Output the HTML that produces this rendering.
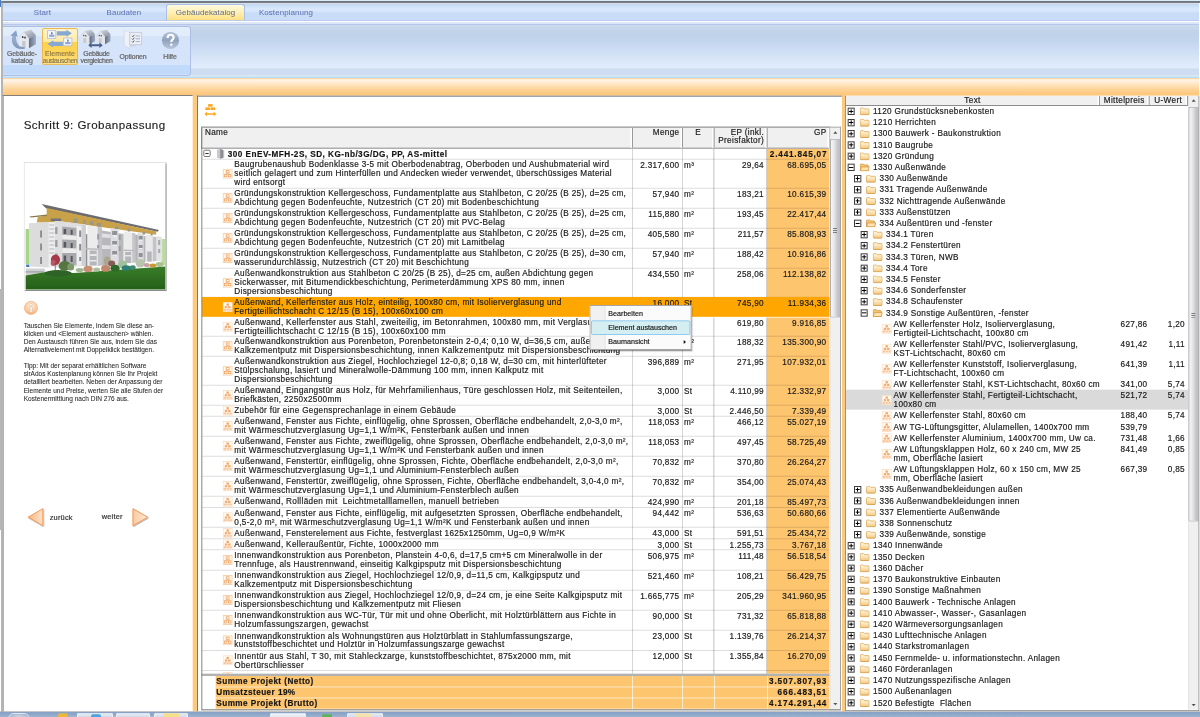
<!DOCTYPE html><html><head><meta charset="utf-8"><title>sirAdos</title><style>*{box-sizing:border-box;margin:0;padding:0}
html,body{width:1200px;height:717px;overflow:hidden;background:#fff}
#wrap{left:0;top:0;width:3600px;height:2151px;transform:scale(.333333333);transform-origin:0 0}
#z{left:0;top:0;width:1200px;height:717px;zoom:3;overflow:hidden}
body{position:relative;font-family:"Liberation Sans",sans-serif;font-size:8.2px;letter-spacing:.32px;color:#141414;line-height:8.7px;-webkit-text-stroke:.18px #2a2a2a}
div,svg{position:absolute}
/* window frame */
#topl{left:0;top:0;width:1200px;height:1px;background:#dcebf8}
#topd{left:1px;top:1px;width:1199px;height:2px;background:linear-gradient(#6b7480,#7c7f84)}
#lblue{left:0;top:0;width:1px;height:7px;background:#4a7fc1}
#lgray{left:1.2px;top:1px;width:1.4px;height:711px;background:#8d9096}
#lstrip{left:0;top:289px;width:1.3px;height:241px;background:#b6b6b6}
/* tab bar */
#tabbar{left:3px;top:3px;width:1196px;height:18px;background:linear-gradient(#d8dfe9 0,#d8dfe9 1px,#c3d8f4 1px,#dae8fb 6px,#d8e6fb 8px,#c8dcf8 10px,#c9ddf8 17px,#b9c9ee 17px)}
.tab{top:4px;height:17px;line-height:17px;text-align:center;font-size:7.9px;letter-spacing:.12px;color:#6175b4;white-space:nowrap;-webkit-text-stroke:.05px #6175b4}
#tabact{left:166px;top:4px;width:79px;height:16.3px;border:1px solid #a9c1e6;border-bottom:none;border-radius:3px 3px 0 0;background:linear-gradient(#fffae0,#ffefb2 50%,#ffe080);}
/* ribbon */
#ribbon{left:3px;top:21px;width:1196px;height:57px;background:linear-gradient(#fff 0,#fff 1px,#dbe7f7 1px,#dbe7f7 3px,#cfdcee 3px,#c9d8ec 6px,#bfd2ea 12px,#c3d5ee 20px,#d3e2f6 34px,#e0ecfc 46px,#e0ecfc 47px,#cddcf0 48px,#cfdef2 54px,#e4eefb 55px,#b9dcf5 56px,#b9dcf5 57px)}
#rl1{left:3px;top:24px;width:1196px;height:1px;background:#b4c3e8;opacity:.8}
#rgroup{left:3px;top:26px;width:188px;height:50px;border:1px solid #adbfe6;border-left:none;border-radius:0 3px 3px 0;background:linear-gradient(#e3eefc 0,#e1ecfc 9px,#d6e4fa 9.5px,#d5e4fa 38px,#c2dbfb 38.5px,#c0d9fb 47px,#dbe9fb 48px)}
#rsel{left:42px;top:28px;width:36px;height:37px;border:1px solid #e9b955;border-radius:2px;background:linear-gradient(#fff5cc 0,#ffeaa4 12.6px,#ffd24c 13.4px,#ffd55a 25px,#ffe394 36px)}
.rlab{font-size:6.9px;line-height:6.4px;letter-spacing:-.1px;text-align:center;color:#646464;white-space:nowrap;-webkit-text-stroke:.22px #686868}
/* orange band */
#oband{left:3px;top:78px;width:1196px;height:18px;background:linear-gradient(#f8c078 0,#fde9cf 1px,#fff4e6 2px,#ffe6c6 6px,#fed49a 11px,#fdc77c 16px,#fdc980 18px)}
#obody{left:3px;top:95px;width:1196px;height:616.3px;background:#fdc97e}
/* left panel */
#left{left:2.6px;top:95px;width:190.2px;height:616.6px;background:#fff;border-left:1.3px solid #8a8a8a;border-top:1px solid #7e7e7e}
#lin{left:-.9px;top:-.5px;width:190px;height:615px}
#left .ttl{left:21px;top:23.3px;font-size:11.6px;letter-spacing:.43px;color:#181818;-webkit-text-stroke:.12px #222;line-height:13px;white-space:nowrap}
#left .help{left:21px;font-size:6.55px;letter-spacing:0;line-height:8.17px;color:#1e1e1e;white-space:nowrap;-webkit-text-stroke:.06px #333}
#left .nav{font-size:7.4px;letter-spacing:.2px;color:#333;white-space:nowrap}
/* main panel */
#main{left:197px;top:95.5px;width:645px;height:615.8px;background:#fff;border-left:1px solid #737a84;border-top:1px solid #737a84}
#tbicon{left:6.2px;top:7.5px;width:12px;height:12.2px;overflow:visible}
#thead{left:3px;top:30.1px;width:629px;height:22.1px;background:#f0f0f0;border-top:1px solid #a4a4a4;border-left:1px solid #8c8c8c;border-bottom:1px solid #8c8c8c}
.hc{top:0;height:20px;border-right:1px solid #9a9a9a;padding:0 2.5px 0 0;text-align:right;line-height:8.6px;white-space:nowrap;box-shadow:inset -1.5px 0 0 #fff}
#tbody{left:3.5px;top:52px;width:628px;height:526px;overflow:hidden}
#gpbg{left:565px;top:0;width:63px;height:526px;background:#fec56f}
.vl{top:0;width:.9px;height:526px;background:#c2c2c2;margin-left:-.6px}
.row{left:0;width:628px;border-bottom:1px solid rgba(0,0,0,.135)}
.row.hl{border-bottom-color:rgba(255,255,255,.7)}
.hlbg{left:0;width:628px;background:#ffa600}
.ei{left:21px;width:10px;height:10px}
.nm{left:32.8px;top:.9px;white-space:pre;line-height:8.78px}
.num{top:1.35px;text-align:right;padding-right:3px;white-space:nowrap}
.unit{top:1.35px;padding-left:1.5px;white-space:nowrap}
.b,.gt{font-weight:bold;letter-spacing:.5px;font-size:8.2px}
.num.b{letter-spacing:.8px;padding-right:2.2px}
.gt{letter-spacing:.46px;left:26.3px;top:1px;white-space:nowrap;color:#111}
.exp{left:1.8px;top:1.2px;width:7.4px;height:7.4px;border:1px solid #767676;border-radius:1.6px;background:#fff}
.exp:after{content:"";position:absolute;left:.9px;top:2.2px;width:3.6px;height:1px;background:#333}
.bk{left:14.8px;top:.3px;width:8.6px;height:10.2px}
#tfoot{left:3px;top:577px;width:629px;height:36.5px;border-top:2.4px solid #b2b2b2;background:#fff}
#tframe{left:3.3px;top:30.1px;width:639.7px;height:583.7px;border:1px solid #858585;border-top-color:#a4a4a4;border-right-color:#a4a4a4;border-bottom-color:#747474}
.frow{left:14.8px;width:613.7px;height:11.1px;background:#fec56f;border-bottom:.85px solid #fff}
.fl{left:.5px;top:.8px;font-weight:bold;letter-spacing:.43px;white-space:nowrap;color:#111}
.fv{right:2.2px;top:.8px;font-weight:bold;letter-spacing:.87px;white-space:nowrap;color:#111}
.fvl{top:0;width:.7px;height:34px;background:#fff}
/* scrollbars */
#msb{left:631.7px;top:31px;width:11px;height:583px;background:#f0f0f0;border-left:1px solid #e4e4e4}
#rsb{left:341.9px;top:0;width:10.4px;height:614.2px;background:#f0f0f0;border-left:1px solid #e4e4e4}
.sbup,.sbdn{left:0;width:10px;height:10px}
.sbup{top:0}.sbdn{bottom:0}
.sbup:after{content:"";position:absolute;left:2.7px;top:3.7px;border:2.3px solid transparent;border-top:none;border-bottom:2.6px solid #505050}
.sbdn:after{content:"";position:absolute;left:2.7px;top:2.6px;border:2.3px solid transparent;border-bottom:none;border-top:2.6px solid #505050}
.sbthumb{left:-.6px;width:10.6px;border:1px solid #b0b0b4;border-right-color:#9c9c9e;border-radius:2px;background:linear-gradient(90deg,#f5f5f6,#e8e8ea 35%,#cbcbcf 70%,#bcbcc0)}
.grip{left:2px;top:50%;width:4px;height:5px;background:repeating-linear-gradient(#7c7c84 0,#7c7c84 1px,transparent 1px,transparent 2px)}
/* context menu */
#ctx{left:391.5px;top:208.5px;width:102px;height:45px;background:#fbfbfb;border:1px solid #a6a6a6;box-shadow:1.5px 1.5px 1.5px rgba(0,0,0,.38);font-size:7.15px;letter-spacing:0;color:#111}
#ctx .gut{left:0;top:0;width:15px;height:43px;background:#f1f1f1;border-right:1px solid #e6e6e6}
#ctx .sel{left:.6px;top:14.3px;width:99.2px;height:14.8px;border:1px solid #8fcaf0;border-radius:1.5px;background:#d5eef2}
#ctx .it{left:17.8px;white-space:nowrap;line-height:9px}
/* right panel */
#right{left:845px;top:95.5px;width:354.2px;height:615.4px;background:#fff;border-left:1px solid #a89068;border-right:1px solid #969696;border-bottom:1px solid #a2a2a2;overflow:hidden}
#rhead{left:0;top:0;width:341.9px;height:10.5px;background:#f0f0f0;border-bottom:1px solid #8c8c8c}
.rh{top:0;height:9.5px;line-height:9px;text-align:center;border-right:1px solid #9a9a9a;white-space:nowrap;box-shadow:inset -1.5px 0 0 #fff}
.tr{left:0;width:342px;height:11.2px}
.pm{top:2px;width:7.3px;height:7.3px;border:1px solid #3c3c3c;background:#fff}
.pm:before{content:"";position:absolute;left:.6px;top:2.15px;width:4.1px;height:1px;background:#000}
.pm.plus:after{content:"";position:absolute;left:2.15px;top:.6px;width:1px;height:4.1px;background:#000}
.fo{top:1.8px;width:10px;height:8px}
.tt{top:1.4px;white-space:pre}
.er{left:0;width:342px}
.er.sel{background:#dadada}
.er .ei{left:35.5px}
.er .et{left:47.5px;top:1.6px;white-space:pre;line-height:8.5px}
.mp{left:254.5px;width:47px;top:1.6px;text-align:right}
.uw{left:303.5px;width:35.5px;top:1.6px;text-align:right}
/* taskbar */
#taskbar{left:0;top:711.4px;width:1200px;height:7px;background:linear-gradient(#a9aeb6 0,#a2aab6 .7px,#86a1c6 1.2px,#8ea8ca 3px,#a0b6d2 6px)}
.tbb{top:1.4px;height:6px;border:1px solid #eef2f7;border-bottom:none;border-radius:2px 2px 0 0;background:linear-gradient(#e6edf5,#c6d3e3)}

#rsb .sbdn:after{top:4.4px}
</style></head><body><div id="wrap"><div id="z">
<div id="topl"></div><div id="topd"></div><div id="lblue"></div><div id="lgray"></div><div id="lstrip"></div>
<div id="tabbar"></div>
<div id="tabact"></div>
<div class="tab" style="left:20px;width:45px">Start</div>
<div class="tab" style="left:100px;width:48px">Baudaten</div>
<div class="tab" style="left:166px;width:79px;color:#667089;-webkit-text-stroke-color:#667089">Gebäudekatalog</div>
<div class="tab" style="left:252px;width:68px">Kostenplanung</div>
<div id="ribbon"></div><div id="rl1"></div>
<div id="rgroup"></div>
<div id="rsel"></div>
<!-- icon 1: Gebaeudekatalog -->
<svg style="left:9px;top:28.3px;width:28px;height:23px" viewBox="0 0 26 21">
<defs><linearGradient id="hg" x1="0" y1="0" x2="1" y2="1"><stop offset="0" stop-color="#eceef1"/><stop offset="1" stop-color="#7f8a9c"/></linearGradient>
<linearGradient id="hs" x1="0" y1="0" x2="1" y2="0"><stop offset="0" stop-color="#5f6d86"/><stop offset="1" stop-color="#a2adbf"/></linearGradient>
<linearGradient id="ba" x1="0" y1="0" x2="0" y2="1"><stop offset="0" stop-color="#9fb2cd"/><stop offset="1" stop-color="#7790b6"/></linearGradient></defs>
<path d="M3.8 6L6.3 3.5L6.6 9.5Q7 15.4 12 16.6L16 16.4L14.5 18.8Q6.4 20.4 3.2 14Q1.8 9.8 3.6 6.2Z" fill="url(#ba)" opacity=".9"/>
<path d="M1.2 6.6L6.6 1.6L8 7.4Z" fill="#86a2cb"/>
<path d="M9 8.2L14.2 2.8L20.5 1.2L25 6.2L18.5 9.2Z" fill="url(#hg)"/>
<path d="M9 8.2L14 3.5L18.5 9.2V18.3L9 16.2Z" fill="#e6e9ee"/>
<path d="M18.5 9.2L25 6.2V14.5L18.5 18.3Z" fill="url(#hs)"/>
<rect x="12" y="7.2" width="1.4" height="1.6" fill="#333"/><rect x="14.2" y="7.6" width="1.4" height="1.6" fill="#333"/>
<path d="M12.2 11.5H15.3V17.5L12.2 16.8Z" fill="#c2c8d2"/>
</svg>
<!-- icon 2: Elemente austauschen -->
<svg style="left:46px;top:28.5px;width:27px;height:20px" viewBox="0 0 27 20">
<path d="M10.8 2.6H20.4V1.2L25.9 4.7L20.4 8.2V6.8H10.8Z" fill="#88a8d4"/>
<path d="M16.9 13.2H7.3V11.7L1.3 15.3L7.3 18.9V17.4H16.9Z" fill="#88a8d4"/>
<rect x="1.6" y="2" width="8.2" height="7.8" fill="#f4f6fb" stroke="#aebcd6" stroke-width=".8"/>
<rect x="5" y="3.6" width="1.6" height="1.8" fill="#5f83bd"/><rect x="3.1" y="6" width="5.3" height="2.2" fill="#8fa9d3"/><path d="M5.8 5.2V6.2" stroke="#5f83bd" stroke-width=".6"/>
<rect x="17.7" y="9.3" width="8.2" height="7.9" fill="#f4f6fb" stroke="#aebcd6" stroke-width=".8"/>
<rect x="21.1" y="10.9" width="1.6" height="1.8" fill="#5f83bd"/><rect x="19.2" y="13.3" width="5.3" height="2.2" fill="#8fa9d3"/><path d="M21.9 12.5V13.5" stroke="#5f83bd" stroke-width=".6"/>
</svg>
<!-- icon 3: Gebaeude vergleichen -->
<svg style="left:79px;top:28.5px;width:34px;height:21px" viewBox="0 0 34 21">
<g id="hs1"><path d="M1.5 6.8L6.2 2.2L12.2 1L16 5.5L10.5 8Z" fill="url(#hg)"/><path d="M1.8 6.8L6.2 2.9L10.5 8V15.5L1.8 13.6Z" fill="#e2e5ea"/><path d="M10.5 8L16 5.5V12.5L10.5 15.5Z" fill="url(#hs)"/><rect x="4.2" y="6.2" width="1.2" height="1.3" fill="#444"/><rect x="6.2" y="6.5" width="1.2" height="1.3" fill="#444"/><path d="M4.4 9.6H7.1V14.7L4.4 14.1Z" fill="#c2c8d2"/></g>
<use href="#hs1" x="15.5" y="0"/>
<path d="M9.2 16.6L12.6 13.9V15.5H20.4V13.9L23.8 16.6L20.4 19.3V17.7H12.6V19.3Z" fill="#4b5f8a"/>
</svg>
<!-- icon 4: Optionen -->
<svg style="left:123px;top:29px;width:21px;height:21px" viewBox="0 0 21 21">
<path d="M1.2 1.2L6.8 3.4V19.6L1.2 16.2Z" fill="#eef1f6" stroke="#c6cedb" stroke-width=".5"/>
<path d="M6.8 3.6H18.6V15.6H6.8Z" fill="#eef2f8" stroke="#aeb9cb" stroke-width=".6"/>
<path d="M6.8 15.6H13.5L12.8 17.5H6.8Z" fill="#cfd6e2"/>
<path d="M9 6.8L9.9 7.8L11.3 5.8M9 9.6L9.9 10.6L11.3 8.6M9 12.4L9.9 13.4L11.3 11.4" stroke="#3c4454" stroke-width=".8" fill="none"/>
<path d="M12.6 7H17M12.6 9.8H17M12.6 12.6H17" stroke="#9aa6ba" stroke-width=".9"/>
</svg>
<!-- icon 5: Hilfe -->
<svg style="left:161px;top:31px;width:19px;height:19px" viewBox="0 0 19 19">
<defs><linearGradient id="qg" x1="0" y1="0" x2="0" y2="1"><stop offset="0" stop-color="#b4c3d6"/><stop offset=".5" stop-color="#8fa3bd"/><stop offset="1" stop-color="#b8c6d8"/></linearGradient></defs>
<circle cx="9.5" cy="9.3" r="8.6" fill="url(#qg)"/>
<path d="M6.6 7Q6.6 3.8 9.6 3.8Q12.6 3.8 12.6 6.4Q12.6 8 11.2 8.9Q10.3 9.6 10.3 11" fill="none" stroke="#fff" stroke-width="2.1"/>
<rect x="9.2" y="12.6" width="2.2" height="2.2" rx=".6" fill="#fff"/>
</svg>
<div class="rlab" style="left:5px;top:50.5px;width:34px">Gebäude-<br>katalog</div>
<div class="rlab" style="left:41.5px;top:50.5px;width:37px;color:#857547;-webkit-text-stroke:.12px #857547"><span style="letter-spacing:.1px">Elemente</span><br><span style="letter-spacing:-.42px">austauschen</span></div>
<div class="rlab" style="left:78px;top:50.5px;width:37px;letter-spacing:-.3px">Gebäude<br>vergleichen</div>
<div class="rlab" style="left:116px;top:53.5px;width:34px">Optionen</div>
<div class="rlab" style="left:153px;top:53.5px;width:34px">Hilfe</div>
<div id="oband"></div><div id="obody"></div>

<div id="left"><div id="lin">
<div class="ttl">Schritt 9: Grobanpassung</div>
<svg style="left:21px;top:66.5px;width:143px;height:129px" viewBox="0 0 143 129">
<defs><linearGradient id="lw" x1="0" y1="0" x2="0" y2="1"><stop offset="0" stop-color="#3a7d2a"/><stop offset="1" stop-color="#245f18"/></linearGradient>
<filter id="bl"><feGaussianBlur stdDeviation=".45"/></filter></defs>
<rect x=".5" y=".5" width="142" height="128" fill="#fff" stroke="#e2e2e2"/>
<path d="M142.5 1.5V128.5H1.5" fill="none" stroke="#8c8c8c" stroke-width="1.2"/>
<g filter="url(#bl)">
<!-- trees bg -->
<path d="M2 67H5.5V102H2Z" fill="#a6d488"/><path d="M137.5 77H141.5V103H137.5Z" fill="#b9dc9e"/>
<rect x="2.5" y="102.5" width="3.5" height="2.5" fill="#3f78b8"/>
<!-- pavement -->
<path d="M2 106.5H21L22 110L2 113.5Z" fill="#cfd2d4"/><path d="M2 109.3H20V110.5H2Z" fill="#9a9da0"/>
<!-- lawn -->
<path d="M2 113.5L22 110L50 111L141.5 104.5V127.5H2Z" fill="url(#lw)"/>
<!-- roof -->
<path d="M17.9 42L135.3 68L134 69.8L22.6 46.6Z" fill="#6c6c70"/>
<path d="M23 46L132.5 69.4V72.8L38 59.5L26.5 60.5H13.2L14 55.2L23 53.6Z" fill="#c9a14a"/>
<path d="M5.6 54.4L23.2 52.6V54L7 55.6Z" fill="#8a7a4a"/>
<!-- body -->
<path d="M5.3 61.2L25.2 60V105.5L5.3 104.5Z" fill="#dcdcdc"/>
<path d="M25.2 60L31 60.3V105L25.2 105.5Z" fill="#ededed"/>
<path d="M25.6 62H30.6V64H25.6ZM25.6 66H30.6V68H25.6ZM25.6 70H30.6V72H25.6ZM25.6 74H30.6V76H25.6ZM25.6 78H30.6V80H25.6ZM25.6 82H30.6V84H25.6ZM25.6 86H30.6V88H25.6ZM25.6 90H30.6V92H25.6Z" fill="#d2d2d4"/>
<path d="M31 58.8L62.3 62.5V104L31 105.5Z" fill="#dedee0"/>
<path d="M38.5 64.5L53 66V103L38.5 104Z" fill="#a9a9ad"/>
<path d="M38.5 72.8L53 73.8V78L38.5 77.5ZM38.5 86L53 86.6V91L38.5 91Z" fill="#ececec"/>
<path d="M40 67H42.5V72H40ZM40 80H42.5V85.5H40ZM40 93.5H42.5V100H40ZM47 67.8H49V72.8H47ZM47 81H49V86H47ZM47 94H49V100H47Z" fill="#55585e"/>
<path d="M53 64L58 64.6V103.5L53 103.5Z" fill="#efefef"/>
<path d="M58 63L62.3 63.5V104L58 104Z" fill="#cfcfd1"/>
<path d="M55.5 68.5H57.5V75H55.5ZM55.5 82H57.5V88.5H55.5ZM55.5 95H57.5V99H55.5Z" fill="#8a8e94"/>
<!-- tower 2 -->
<path d="M63.6 63.2L74 64.8V104L63.6 104.5Z" fill="#ececec"/>
<path d="M74 64.8L78.4 65.4V103.5L74 104Z" fill="#c3c3c6"/>
<path d="M62.3 72L63.6 72.2V104H62.3Z" fill="#8f8f93"/>
<path d="M62.5 86L76 86.5V88L62.5 87.6Z" fill="#bdbdc0"/>
<path d="M66 88.5H73V103.5H66Z" fill="#b4b6ba"/><path d="M66 92H73V94H66ZM66 98H73V99.5H66Z" fill="#e8e8ea"/>
<path d="M73.5 72H75.5V77.5H73.5ZM73.5 83H75.5V86H73.5Z" fill="#9a9da2"/>
<!-- section 3 -->
<path d="M78.4 68.5L100 72V102L78.4 103.5Z" fill="#b8b8bc"/>
<path d="M78.4 71.5L87 72.6V76L78.4 75.5ZM78.4 83L87 83.6V87L78.4 87Z" fill="#e2e2e4"/>
<path d="M87 66L95 67.2V102.5L87 103Z" fill="#dedee0"/>
<path d="M88.5 69H93.5V75H88.5ZM88.5 79H93.5V84H88.5ZM88.5 89H93.5V94H88.5Z" fill="#8f9298"/>
<path d="M88.5 73H93.5V75H88.5ZM88.5 82.5H93.5V84H88.5ZM88.5 92.5H93.5V94H88.5Z" fill="#eeeef0"/>
<path d="M95 73H97V78H95ZM95 84H97V89H95Z" fill="#9a9da2"/>
<!-- tower 3 -->
<path d="M100 69.5L108.5 70.8V101L100 102Z" fill="#ebebeb"/>
<path d="M108.5 70.8L111.5 71.2V100.5L108.5 101Z" fill="#c6c6c9"/>
<path d="M100 87.5L111 88V89.2L100 89Z" fill="#b9b9bc"/>
<path d="M101.5 90H107.5V101H101.5Z" fill="#b4b6ba"/><path d="M101.5 93H107.5V94.5H101.5Z" fill="#e8e8ea"/>
<!-- section 4 -->
<path d="M111.5 72.5L122 74.2V100L111.5 100.5Z" fill="#b4b4b9"/>
<path d="M114 71L120 72V100L114 100.5Z" fill="#dcdcde"/>
<path d="M115 74H119V79H115ZM115 83H119V87.5H115ZM115 91H119V95H115Z" fill="#8f9298"/>
<path d="M115 77.5H119V79H115ZM115 86H119V87.5H115Z" fill="#eeeef0"/>
<path d="M122 72.5L129 73.6V99.5L122 100Z" fill="#e9e9e9"/>
<path d="M123.5 89.5H128V99.5H123.5Z" fill="#b4b6ba"/>
<path d="M129 74.5L133 75V99L129 99.5Z" fill="#c4c4c7"/>
<path d="M133 74L138.5 75V99L133 99Z" fill="#e3e3e3"/>
<path d="M134.5 78H136.5V83H134.5ZM134.5 87H136.5V91H134.5Z" fill="#a6a9ae"/>
<!-- left block windows -->
<path d="M16.5 68.5H18.3V75.5H16.5ZM16.5 81.5H18.3V88.5H16.5ZM16.5 95H18.3V102H16.5Z" fill="#85898f"/>
<path d="M31.5 65H33.8V72H31.5ZM31.5 78H33.8V85H31.5ZM31.5 91.5H33.8V98H31.5Z" fill="#9a9da2"/>
<!-- roof-level windows -->
<path d="M27 56.5H37.5V59H27Z" fill="#70737a"/>
<path d="M50 56.5H54V61H50ZM59.5 58H62V62H59.5ZM66 59.5H70V63H66ZM73 61H77.5V64.5H73ZM91.5 64.5H95V67H91.5ZM104 66.5H106.5V69.5H104ZM119 70H121.5V72.5H119ZM127 71.5H129V73.5H127Z" fill="#9a9688"/>
<!-- bushes -->
<ellipse cx="34.5" cy="111.2" rx="13.5" ry="3.2" fill="#2f6227"/>
<ellipse cx="31.8" cy="97.8" rx="4.6" ry="5.2" fill="#a8384c"/><ellipse cx="29.5" cy="101" rx="2.5" ry="3" fill="#b85a64"/>
<path d="M31.6 101V109" stroke="#5a4a2a" stroke-width=".7"/>
<ellipse cx="41" cy="104" rx="6" ry="5" fill="#55763f"/>
<ellipse cx="47" cy="105" rx="3.5" ry="3.5" fill="#7d9a6a"/>
<ellipse cx="56" cy="108" rx="4" ry="2" fill="#9fb894"/>
<ellipse cx="64.4" cy="107" rx="4.6" ry="3.2" fill="#c98f74"/>
<ellipse cx="73" cy="107.5" rx="3.5" ry="2" fill="#a9c09a"/>
<ellipse cx="82" cy="106.4" rx="4.6" ry="3.4" fill="#c4876c"/>
<ellipse cx="83.5" cy="99" rx="3.4" ry="4.5" fill="#a9a692"/>
<ellipse cx="88" cy="101.5" rx="3.5" ry="3" fill="#8a5a58"/>
<ellipse cx="91.4" cy="106.2" rx="4.6" ry="3.4" fill="#2f6a2c"/>
<ellipse cx="99" cy="102.5" rx="4.5" ry="4" fill="#9fc09a"/>
<ellipse cx="102.5" cy="106" rx="4.5" ry="2.8" fill="#2f7f74"/>
<ellipse cx="109" cy="105.6" rx="3" ry="2.4" fill="#3d8a70"/>
<ellipse cx="116.6" cy="101.2" rx="4.6" ry="4.2" fill="#b9c4ac"/>
<ellipse cx="123" cy="103" rx="3" ry="2" fill="#c9a0a8"/>
<ellipse cx="129.2" cy="103.4" rx="3.4" ry="2" fill="#c99a30"/>
<ellipse cx="136" cy="102.5" rx="4" ry="2.4" fill="#a9c290"/>
</g>
</svg>
<svg style="left:21px;top:204.9px;width:15px;height:15px" viewBox="0 0 15 15"><defs><radialGradient id="ig" cx=".5" cy=".35" r=".7"><stop offset="0" stop-color="#fff0e0"/><stop offset=".7" stop-color="#fbc493"/><stop offset="1" stop-color="#f3a25c"/></radialGradient></defs><circle cx="7.3" cy="7.5" r="6.6" fill="url(#ig)" stroke="#f0b07a" stroke-width=".6"/><path d="M5.9 6.1H8.3V10.6H9.2V11.6H5.6V10.6H6.5V7.1H5.9Z" fill="#fff" stroke="#c9b4a4" stroke-width=".45"/><circle cx="7.3" cy="4.2" r="1.15" fill="#fff" stroke="#c9b4a4" stroke-width=".45"/></svg>
<div class="help" style="top:225.9px">Tauschen Sie Elemente, indem Sie diese an-<br>klicken und &lt;Element austauschen&gt; wählen.<br>Den Austausch führen Sie aus, indem Sie das<br>Alternativelement mit Doppelklick bestätigen.</div>
<div class="help" style="top:266.3px">Tipp: Mit der separat erhältlichen Software<br>sirAdos Kostenplanung können Sie Ihr Projekt<br>detailliert bearbeiten. Neben der Anpassung der<br>Elemente und Preise, werten Sie alle Stufen der<br>Kostenermittlung nach DIN 276 aus.</div>
<svg style="left:23px;top:411px;width:20px;height:21px;overflow:visible" viewBox="0 0 20 21"><defs><linearGradient id="ng" x1="0" y1="0" x2="1" y2="0"><stop offset="0" stop-color="#f9b580"/><stop offset="1" stop-color="#fde3cc"/></linearGradient><filter id="sh" x="-30%" y="-30%" width="160%" height="160%"><feDropShadow dx=".6" dy=".8" stdDeviation=".7" flood-color="#000" flood-opacity=".35"/></filter></defs><path d="M2.5 10.5L17.2 2V19Z" fill="url(#ng)" stroke="#f39a55" stroke-width="1" filter="url(#sh)"/></svg>
<svg style="left:128px;top:411px;width:20px;height:21px;overflow:visible" viewBox="0 0 20 21"><defs><linearGradient id="ng2" x1="0" y1="0" x2="1" y2="0"><stop offset="0" stop-color="#fbc9a0"/><stop offset="1" stop-color="#fdebd9"/></linearGradient></defs><path d="M17 10.5L2.3 2V19Z" fill="url(#ng2)" stroke="#f39a55" stroke-width="1" filter="url(#sh)"/></svg>
<div class="nav" style="left:47px;top:417.5px">zurück</div>
<div class="nav" style="left:99px;top:417px">weiter</div>
</div></div>

<div id="main">
<svg id="tbicon" viewBox="0 0 12 12"><rect x="3.8" y="0" width="4.4" height="2.6" fill="#ffa51f"/><rect x="1" y="3.3" width="4.6" height="2.6" fill="#ffa51f"/><rect x="6.2" y="3.3" width="4.6" height="2.6" fill="#ffa51f"/><path d="M0 9.9L2.6 7.6V9.1H9.4V7.6L12 9.9L9.4 12.2V10.7H2.6V12.2Z" fill="#ffa51f"/></svg>
<div id="thead"><div class="hc" style="left:0;width:431.0px;text-align:left;padding-left:3px">Name</div>
<div class="hc" style="left:431.0px;width:50.0px">Menge</div>
<div class="hc" style="left:481.0px;width:31.5px;text-align:center;padding-right:0">E</div>
<div class="hc" style="left:512.5px;width:53.0px">EP (inkl.<br>Preisfaktor)</div>
<div class="hc" style="left:565.5px;width:62.5px">GP</div>
</div>
<div id="tbody">
<div id="gpbg"></div>
<div class="vl" style="left:431.0px"></div>
<div class="vl" style="left:481.0px"></div>
<div class="vl" style="left:512.5px"></div>
<div class="vl" style="left:565.5px"></div>
<div class="row" style="top:0;height:11px"><div class="exp"></div><svg class="bk" viewBox="0 0 8 10"><path d="M0.5 1L3.5 0V10L0.5 9Z" fill="#c8c8cc"/><path d="M3.5 0L6.5 1.2V9.2L3.5 10Z" fill="#8c8c94"/><path d="M6.5 1.2L7.5 2V8.6L6.5 9.2Z" fill="#b4b4ba"/></svg><div class="gt">300 EnEV-MFH-2S, SD, KG-nb/3G/DG, PP, AS-mittel</div><div class="num b" style="left:565.5px;width:62.5px">2.441.845,07</div></div>
<div class="row" style="top:11.0px;height:29.0px">
<svg class="ei" style="top:9.0px" viewBox="0 0 10 10"><rect x=".5" y=".5" width="9" height="9" fill="#fff6ec" stroke="#f8d2ae"/><rect x="3.6" y="1.8" width="2.8" height="2.4" fill="none" stroke="#f0a868" stroke-width=".8"/><rect x="1.8" y="5.8" width="2.4" height="2.2" fill="none" stroke="#f0a868" stroke-width=".8"/><rect x="5.8" y="5.8" width="2.4" height="2.2" fill="none" stroke="#f0a868" stroke-width=".8"/><path d="M5 4.2V5.2M3 5.8V5.2H7V5.8" fill="none" stroke="#f0a868" stroke-width=".6"/></svg>
<div class="nm">Baugrubenaushub Bodenklasse 3-5 mit Oberbodenabtrag, Oberboden und Aushubmaterial wird<br>seitlich gelagert und zum Hinterfüllen und Andecken wieder verwendet, überschüssiges Material<br>wird entsorgt</div>
<div class="num" style="left:431.0px;width:50.0px">2.317,600</div>
<div class="unit" style="left:481.0px">m³</div>
<div class="num" style="left:512.5px;width:53.0px">29,64</div>
<div class="num" style="left:565.5px;width:62.5px">68.695,05</div>
</div>
<div class="row" style="top:40.0px;height:20.0px">
<svg class="ei" style="top:4.5px" viewBox="0 0 10 10"><rect x=".5" y=".5" width="9" height="9" fill="#fff6ec" stroke="#f8d2ae"/><rect x="3.6" y="1.8" width="2.8" height="2.4" fill="none" stroke="#f0a868" stroke-width=".8"/><rect x="1.8" y="5.8" width="2.4" height="2.2" fill="none" stroke="#f0a868" stroke-width=".8"/><rect x="5.8" y="5.8" width="2.4" height="2.2" fill="none" stroke="#f0a868" stroke-width=".8"/><path d="M5 4.2V5.2M3 5.8V5.2H7V5.8" fill="none" stroke="#f0a868" stroke-width=".6"/></svg>
<div class="nm">Gründungskonstruktion Kellergeschoss, Fundamentplatte aus Stahlbeton, C 20/25 (B 25), d=25 cm,<br>Abdichtung gegen Bodenfeuchte, Nutzestrich (CT 20) mit Bodenbeschichtung</div>
<div class="num" style="left:431.0px;width:50.0px">57,940</div>
<div class="unit" style="left:481.0px">m²</div>
<div class="num" style="left:512.5px;width:53.0px">183,21</div>
<div class="num" style="left:565.5px;width:62.5px">10.615,39</div>
</div>
<div class="row" style="top:60.0px;height:20.0px">
<svg class="ei" style="top:4.5px" viewBox="0 0 10 10"><rect x=".5" y=".5" width="9" height="9" fill="#fff6ec" stroke="#f8d2ae"/><rect x="3.6" y="1.8" width="2.8" height="2.4" fill="none" stroke="#f0a868" stroke-width=".8"/><rect x="1.8" y="5.8" width="2.4" height="2.2" fill="none" stroke="#f0a868" stroke-width=".8"/><rect x="5.8" y="5.8" width="2.4" height="2.2" fill="none" stroke="#f0a868" stroke-width=".8"/><path d="M5 4.2V5.2M3 5.8V5.2H7V5.8" fill="none" stroke="#f0a868" stroke-width=".6"/></svg>
<div class="nm">Gründungskonstruktion Kellergeschoss, Fundamentplatte aus Stahlbeton, C 20/25 (B 25), d=25 cm,<br>Abdichtung gegen Bodenfeuchte, Nutzestrich (CT 20) mit PVC-Belag</div>
<div class="num" style="left:431.0px;width:50.0px">115,880</div>
<div class="unit" style="left:481.0px">m²</div>
<div class="num" style="left:512.5px;width:53.0px">193,45</div>
<div class="num" style="left:565.5px;width:62.5px">22.417,44</div>
</div>
<div class="row" style="top:80.0px;height:20.0px">
<svg class="ei" style="top:4.5px" viewBox="0 0 10 10"><rect x=".5" y=".5" width="9" height="9" fill="#fff6ec" stroke="#f8d2ae"/><rect x="3.6" y="1.8" width="2.8" height="2.4" fill="none" stroke="#f0a868" stroke-width=".8"/><rect x="1.8" y="5.8" width="2.4" height="2.2" fill="none" stroke="#f0a868" stroke-width=".8"/><rect x="5.8" y="5.8" width="2.4" height="2.2" fill="none" stroke="#f0a868" stroke-width=".8"/><path d="M5 4.2V5.2M3 5.8V5.2H7V5.8" fill="none" stroke="#f0a868" stroke-width=".6"/></svg>
<div class="nm">Gründungskonstruktion Kellergeschoss, Fundamentplatte aus Stahlbeton, C 20/25 (B 25), d=25 cm,<br>Abdichtung gegen Bodenfeuchte, Nutzestrich (CT 20) mit Lamitbelag</div>
<div class="num" style="left:431.0px;width:50.0px">405,580</div>
<div class="unit" style="left:481.0px">m²</div>
<div class="num" style="left:512.5px;width:53.0px">211,57</div>
<div class="num" style="left:565.5px;width:62.5px">85.808,93</div>
</div>
<div class="row" style="top:100.0px;height:20.0px">
<svg class="ei" style="top:4.5px" viewBox="0 0 10 10"><rect x=".5" y=".5" width="9" height="9" fill="#fff6ec" stroke="#f8d2ae"/><rect x="3.6" y="1.8" width="2.8" height="2.4" fill="none" stroke="#f0a868" stroke-width=".8"/><rect x="1.8" y="5.8" width="2.4" height="2.2" fill="none" stroke="#f0a868" stroke-width=".8"/><rect x="5.8" y="5.8" width="2.4" height="2.2" fill="none" stroke="#f0a868" stroke-width=".8"/><path d="M5 4.2V5.2M3 5.8V5.2H7V5.8" fill="none" stroke="#f0a868" stroke-width=".6"/></svg>
<div class="nm">Gründungskonstruktion Kellergeschoss, Fundamentplatte aus Stahlbeton, C 20/25 (B 25), d=30 cm,<br>wasserundurchlässig, Nutzestrich (CT 20) mit Beschichtung</div>
<div class="num" style="left:431.0px;width:50.0px">57,940</div>
<div class="unit" style="left:481.0px">m²</div>
<div class="num" style="left:512.5px;width:53.0px">188,42</div>
<div class="num" style="left:565.5px;width:62.5px">10.916,86</div>
</div>
<div class="row" style="top:120.0px;height:29.0px">
<svg class="ei" style="top:9.0px" viewBox="0 0 10 10"><rect x=".5" y=".5" width="9" height="9" fill="#fff6ec" stroke="#f8d2ae"/><rect x="3.6" y="1.8" width="2.8" height="2.4" fill="none" stroke="#f0a868" stroke-width=".8"/><rect x="1.8" y="5.8" width="2.4" height="2.2" fill="none" stroke="#f0a868" stroke-width=".8"/><rect x="5.8" y="5.8" width="2.4" height="2.2" fill="none" stroke="#f0a868" stroke-width=".8"/><path d="M5 4.2V5.2M3 5.8V5.2H7V5.8" fill="none" stroke="#f0a868" stroke-width=".6"/></svg>
<div class="nm">Außenwandkonstruktion aus Stahlbeton C 20/25 (B 25), d=25 cm, außen Abdichtung gegen<br>Sickerwasser, mit Bitumendickbeschichtung, Perimeterdämmung XPS 80 mm, innen<br>Dispersionsbeschichtung</div>
<div class="num" style="left:431.0px;width:50.0px">434,550</div>
<div class="unit" style="left:481.0px">m²</div>
<div class="num" style="left:512.5px;width:53.0px">258,06</div>
<div class="num" style="left:565.5px;width:62.5px">112.138,82</div>
</div>
<div class="hlbg" style="top:148.4px;height:20.1px"></div>
<div class="row hl" style="top:149.0px;height:20.0px">
<svg class="ei" style="top:4.5px" viewBox="0 0 10 10"><rect x=".4" y=".4" width="9.2" height="9.2" fill="#fffaf4" stroke="#fbdcbf" stroke-width=".8"/><rect x="3.8" y="1.5" width="2.4" height="2.2" fill="#f1a767"/><rect x="2.1" y="4.1" width="2.5" height="2.2" fill="#f2ad72"/><rect x="5.4" y="4.1" width="2.5" height="2.2" fill="#f2ad72"/><rect x="1" y="6.8" width="2.3" height="2" fill="#f6c59c"/><rect x="3.85" y="6.8" width="2.3" height="2" fill="#f6c59c"/><rect x="6.7" y="6.8" width="2.3" height="2" fill="#f6c59c"/></svg>
<div class="nm">Außenwand, Kellerfenster aus Holz, einteilig, 100x80 cm, mit Isolierverglasung und<br>Fertigteillichtschacht C 12/15 (B 15), 100x60x100 cm</div>
<div class="num" style="left:431.0px;width:50.0px">16,000</div>
<div class="unit" style="left:481.0px">St</div>
<div class="num" style="left:512.5px;width:53.0px">745,90</div>
<div class="num" style="left:565.5px;width:62.5px">11.934,36</div>
</div>
<div class="row" style="top:169.0px;height:19.0px">
<svg class="ei" style="top:4.0px" viewBox="0 0 10 10"><rect x=".4" y=".4" width="9.2" height="9.2" fill="#fffaf4" stroke="#fbdcbf" stroke-width=".8"/><rect x="3.8" y="1.5" width="2.4" height="2.2" fill="#f1a767"/><rect x="2.1" y="4.1" width="2.5" height="2.2" fill="#f2ad72"/><rect x="5.4" y="4.1" width="2.5" height="2.2" fill="#f2ad72"/><rect x="1" y="6.8" width="2.3" height="2" fill="#f6c59c"/><rect x="3.85" y="6.8" width="2.3" height="2" fill="#f6c59c"/><rect x="6.7" y="6.8" width="2.3" height="2" fill="#f6c59c"/></svg>
<div class="nm">Außenwand, Kellerfenster aus Stahl, zweiteilig, im Betonrahmen, 100x80 mm, mit Verglasung und<br>Fertigteillichtschacht C 12/15 (B 15), 100x60x100 mm</div>
<div class="num" style="left:431.0px;width:50.0px">16,000</div>
<div class="unit" style="left:481.0px">St</div>
<div class="num" style="left:512.5px;width:53.0px">619,80</div>
<div class="num" style="left:565.5px;width:62.5px">9.916,85</div>
</div>
<div class="row" style="top:188.0px;height:20.0px">
<svg class="ei" style="top:4.5px" viewBox="0 0 10 10"><rect x=".5" y=".5" width="9" height="9" fill="#fff6ec" stroke="#f8d2ae"/><rect x="3.6" y="1.8" width="2.8" height="2.4" fill="none" stroke="#f0a868" stroke-width=".8"/><rect x="1.8" y="5.8" width="2.4" height="2.2" fill="none" stroke="#f0a868" stroke-width=".8"/><rect x="5.8" y="5.8" width="2.4" height="2.2" fill="none" stroke="#f0a868" stroke-width=".8"/><path d="M5 4.2V5.2M3 5.8V5.2H7V5.8" fill="none" stroke="#f0a868" stroke-width=".6"/></svg>
<div class="nm">Außenwandkonstruktion aus Porenbeton, Porenbetonstein 2-0,4; 0,10 W, d=36,5 cm, außen<br>Kalkzementputz mit Dispersionsbeschichtung, innen Kalkzementputz mit Dispersionsbeschichtung</div>
<div class="num" style="left:431.0px;width:50.0px">718,433</div>
<div class="unit" style="left:481.0px">m²</div>
<div class="num" style="left:512.5px;width:53.0px">188,32</div>
<div class="num" style="left:565.5px;width:62.5px">135.300,90</div>
</div>
<div class="row" style="top:208.0px;height:29.0px">
<svg class="ei" style="top:9.0px" viewBox="0 0 10 10"><rect x=".5" y=".5" width="9" height="9" fill="#fff6ec" stroke="#f8d2ae"/><rect x="3.6" y="1.8" width="2.8" height="2.4" fill="none" stroke="#f0a868" stroke-width=".8"/><rect x="1.8" y="5.8" width="2.4" height="2.2" fill="none" stroke="#f0a868" stroke-width=".8"/><rect x="5.8" y="5.8" width="2.4" height="2.2" fill="none" stroke="#f0a868" stroke-width=".8"/><path d="M5 4.2V5.2M3 5.8V5.2H7V5.8" fill="none" stroke="#f0a868" stroke-width=".6"/></svg>
<div class="nm">Außenwandkonstruktion aus Ziegel, Hochlochziegel 12-0,8; 0,18 W, d=30 cm, mit hinterlüfteter<br>Stülpschalung, lasiert und Mineralwolle-Dämmung 100 mm, innen Kalkputz mit<br>Dispersionsbeschichtung</div>
<div class="num" style="left:431.0px;width:50.0px">396,889</div>
<div class="unit" style="left:481.0px">m²</div>
<div class="num" style="left:512.5px;width:53.0px">271,95</div>
<div class="num" style="left:565.5px;width:62.5px">107.932,01</div>
</div>
<div class="row" style="top:237.0px;height:20.0px">
<svg class="ei" style="top:4.5px" viewBox="0 0 10 10"><rect x=".4" y=".4" width="9.2" height="9.2" fill="#fffaf4" stroke="#fbdcbf" stroke-width=".8"/><rect x="3.8" y="1.5" width="2.4" height="2.2" fill="#f1a767"/><rect x="2.1" y="4.1" width="2.5" height="2.2" fill="#f2ad72"/><rect x="5.4" y="4.1" width="2.5" height="2.2" fill="#f2ad72"/><rect x="1" y="6.8" width="2.3" height="2" fill="#f6c59c"/><rect x="3.85" y="6.8" width="2.3" height="2" fill="#f6c59c"/><rect x="6.7" y="6.8" width="2.3" height="2" fill="#f6c59c"/></svg>
<div class="nm">Außenwand, Eingangstür aus Holz, für Mehrfamilienhaus, Türe geschlossen Holz, mit Seitenteilen,<br>Briefkästen, 2250x2500mm</div>
<div class="num" style="left:431.0px;width:50.0px">3,000</div>
<div class="unit" style="left:481.0px">St</div>
<div class="num" style="left:512.5px;width:53.0px">4.110,99</div>
<div class="num" style="left:565.5px;width:62.5px">12.332,97</div>
</div>
<div class="row" style="top:257.0px;height:11.0px">
<svg class="ei" style="top:0.0px" viewBox="0 0 10 10"><rect x=".4" y=".4" width="9.2" height="9.2" fill="#fffaf4" stroke="#fbdcbf" stroke-width=".8"/><rect x="3.8" y="1.5" width="2.4" height="2.2" fill="#f1a767"/><rect x="2.1" y="4.1" width="2.5" height="2.2" fill="#f2ad72"/><rect x="5.4" y="4.1" width="2.5" height="2.2" fill="#f2ad72"/><rect x="1" y="6.8" width="2.3" height="2" fill="#f6c59c"/><rect x="3.85" y="6.8" width="2.3" height="2" fill="#f6c59c"/><rect x="6.7" y="6.8" width="2.3" height="2" fill="#f6c59c"/></svg>
<div class="nm">Zubehör für eine Gegensprechanlage in einem Gebäude</div>
<div class="num" style="left:431.0px;width:50.0px">3,000</div>
<div class="unit" style="left:481.0px">St</div>
<div class="num" style="left:512.5px;width:53.0px">2.446,50</div>
<div class="num" style="left:565.5px;width:62.5px">7.339,49</div>
</div>
<div class="row" style="top:268.0px;height:20.0px">
<svg class="ei" style="top:4.5px" viewBox="0 0 10 10"><rect x=".4" y=".4" width="9.2" height="9.2" fill="#fffaf4" stroke="#fbdcbf" stroke-width=".8"/><rect x="3.8" y="1.5" width="2.4" height="2.2" fill="#f1a767"/><rect x="2.1" y="4.1" width="2.5" height="2.2" fill="#f2ad72"/><rect x="5.4" y="4.1" width="2.5" height="2.2" fill="#f2ad72"/><rect x="1" y="6.8" width="2.3" height="2" fill="#f6c59c"/><rect x="3.85" y="6.8" width="2.3" height="2" fill="#f6c59c"/><rect x="6.7" y="6.8" width="2.3" height="2" fill="#f6c59c"/></svg>
<div class="nm">Außenwand, Fenster aus Fichte, einflügelig, ohne Sprossen, Oberfläche endbehandelt, 2,0-3,0 m²,<br>mit Wärmeschutzverglasung Ug=1,1 W/m²K, Fensterbank außen und innen</div>
<div class="num" style="left:431.0px;width:50.0px">118,053</div>
<div class="unit" style="left:481.0px">m²</div>
<div class="num" style="left:512.5px;width:53.0px">466,12</div>
<div class="num" style="left:565.5px;width:62.5px">55.027,19</div>
</div>
<div class="row" style="top:288.0px;height:20.0px">
<svg class="ei" style="top:4.5px" viewBox="0 0 10 10"><rect x=".4" y=".4" width="9.2" height="9.2" fill="#fffaf4" stroke="#fbdcbf" stroke-width=".8"/><rect x="3.8" y="1.5" width="2.4" height="2.2" fill="#f1a767"/><rect x="2.1" y="4.1" width="2.5" height="2.2" fill="#f2ad72"/><rect x="5.4" y="4.1" width="2.5" height="2.2" fill="#f2ad72"/><rect x="1" y="6.8" width="2.3" height="2" fill="#f6c59c"/><rect x="3.85" y="6.8" width="2.3" height="2" fill="#f6c59c"/><rect x="6.7" y="6.8" width="2.3" height="2" fill="#f6c59c"/></svg>
<div class="nm">Außenwand, Fenster aus Fichte, zweiflügelig, ohne Sprossen, Oberfläche endbehandelt, 2,0-3,0 m²,<br>mit Wärmeschutzverglasung Ug=1,1 W/m²K und Fensterbank außen und innen</div>
<div class="num" style="left:431.0px;width:50.0px">118,053</div>
<div class="unit" style="left:481.0px">m²</div>
<div class="num" style="left:512.5px;width:53.0px">497,45</div>
<div class="num" style="left:565.5px;width:62.5px">58.725,49</div>
</div>
<div class="row" style="top:308.0px;height:20.0px">
<svg class="ei" style="top:4.5px" viewBox="0 0 10 10"><rect x=".4" y=".4" width="9.2" height="9.2" fill="#fffaf4" stroke="#fbdcbf" stroke-width=".8"/><rect x="3.8" y="1.5" width="2.4" height="2.2" fill="#f1a767"/><rect x="2.1" y="4.1" width="2.5" height="2.2" fill="#f2ad72"/><rect x="5.4" y="4.1" width="2.5" height="2.2" fill="#f2ad72"/><rect x="1" y="6.8" width="2.3" height="2" fill="#f6c59c"/><rect x="3.85" y="6.8" width="2.3" height="2" fill="#f6c59c"/><rect x="6.7" y="6.8" width="2.3" height="2" fill="#f6c59c"/></svg>
<div class="nm">Außenwand, Fenstertür, einflügelig, ohne Sprossen, Fichte, Oberfläche endbehandelt, 2,0-3,0 m²,<br>mit Wärmeschutzverglasung Ug=1,1 und Aluminium-Fensterblech außen</div>
<div class="num" style="left:431.0px;width:50.0px">70,832</div>
<div class="unit" style="left:481.0px">m²</div>
<div class="num" style="left:512.5px;width:53.0px">370,80</div>
<div class="num" style="left:565.5px;width:62.5px">26.264,27</div>
</div>
<div class="row" style="top:328.0px;height:20.0px">
<svg class="ei" style="top:4.5px" viewBox="0 0 10 10"><rect x=".4" y=".4" width="9.2" height="9.2" fill="#fffaf4" stroke="#fbdcbf" stroke-width=".8"/><rect x="3.8" y="1.5" width="2.4" height="2.2" fill="#f1a767"/><rect x="2.1" y="4.1" width="2.5" height="2.2" fill="#f2ad72"/><rect x="5.4" y="4.1" width="2.5" height="2.2" fill="#f2ad72"/><rect x="1" y="6.8" width="2.3" height="2" fill="#f6c59c"/><rect x="3.85" y="6.8" width="2.3" height="2" fill="#f6c59c"/><rect x="6.7" y="6.8" width="2.3" height="2" fill="#f6c59c"/></svg>
<div class="nm">Außenwand, Fenstertür, zweiflügelig, ohne Sprossen, Fichte, Oberfläche endbehandelt, 3,0-4,0 m²,<br>mit Wärmeschutzverglasung Ug=1,1 und Aluminium-Fensterblech außen</div>
<div class="num" style="left:431.0px;width:50.0px">70,832</div>
<div class="unit" style="left:481.0px">m²</div>
<div class="num" style="left:512.5px;width:53.0px">354,00</div>
<div class="num" style="left:565.5px;width:62.5px">25.074,43</div>
</div>
<div class="row" style="top:348.0px;height:11.5px">
<svg class="ei" style="top:0.2px" viewBox="0 0 10 10"><rect x=".4" y=".4" width="9.2" height="9.2" fill="#fffaf4" stroke="#fbdcbf" stroke-width=".8"/><rect x="3.8" y="1.5" width="2.4" height="2.2" fill="#f1a767"/><rect x="2.1" y="4.1" width="2.5" height="2.2" fill="#f2ad72"/><rect x="5.4" y="4.1" width="2.5" height="2.2" fill="#f2ad72"/><rect x="1" y="6.8" width="2.3" height="2" fill="#f6c59c"/><rect x="3.85" y="6.8" width="2.3" height="2" fill="#f6c59c"/><rect x="6.7" y="6.8" width="2.3" height="2" fill="#f6c59c"/></svg>
<div class="nm">Außenwand, Rollläden mit  Leichtmetalllamellen, manuell betrieben</div>
<div class="num" style="left:431.0px;width:50.0px">424,990</div>
<div class="unit" style="left:481.0px">m²</div>
<div class="num" style="left:512.5px;width:53.0px">201,18</div>
<div class="num" style="left:565.5px;width:62.5px">85.497,73</div>
</div>
<div class="row" style="top:359.5px;height:19.8px">
<svg class="ei" style="top:4.4px" viewBox="0 0 10 10"><rect x=".4" y=".4" width="9.2" height="9.2" fill="#fffaf4" stroke="#fbdcbf" stroke-width=".8"/><rect x="3.8" y="1.5" width="2.4" height="2.2" fill="#f1a767"/><rect x="2.1" y="4.1" width="2.5" height="2.2" fill="#f2ad72"/><rect x="5.4" y="4.1" width="2.5" height="2.2" fill="#f2ad72"/><rect x="1" y="6.8" width="2.3" height="2" fill="#f6c59c"/><rect x="3.85" y="6.8" width="2.3" height="2" fill="#f6c59c"/><rect x="6.7" y="6.8" width="2.3" height="2" fill="#f6c59c"/></svg>
<div class="nm">Außenwand, Fenster aus Fichte, einflügelig, mit aufgesetzten Sprossen, Oberfläche endbehandelt,<br>0,5-2,0 m², mit Wärmeschutzverglasung Ug=1,1 W/m²K und Fensterbank außen und innen</div>
<div class="num" style="left:431.0px;width:50.0px">94,442</div>
<div class="unit" style="left:481.0px">m²</div>
<div class="num" style="left:512.5px;width:53.0px">536,63</div>
<div class="num" style="left:565.5px;width:62.5px">50.680,66</div>
</div>
<div class="row" style="top:379.3px;height:11.4px">
<svg class="ei" style="top:0.2px" viewBox="0 0 10 10"><rect x=".4" y=".4" width="9.2" height="9.2" fill="#fffaf4" stroke="#fbdcbf" stroke-width=".8"/><rect x="3.8" y="1.5" width="2.4" height="2.2" fill="#f1a767"/><rect x="2.1" y="4.1" width="2.5" height="2.2" fill="#f2ad72"/><rect x="5.4" y="4.1" width="2.5" height="2.2" fill="#f2ad72"/><rect x="1" y="6.8" width="2.3" height="2" fill="#f6c59c"/><rect x="3.85" y="6.8" width="2.3" height="2" fill="#f6c59c"/><rect x="6.7" y="6.8" width="2.3" height="2" fill="#f6c59c"/></svg>
<div class="nm">Außenwand, Fensterelement aus Fichte, festverglast 1625x1250mm, Ug=0,9 W/m²K</div>
<div class="num" style="left:431.0px;width:50.0px">43,000</div>
<div class="unit" style="left:481.0px">St</div>
<div class="num" style="left:512.5px;width:53.0px">591,51</div>
<div class="num" style="left:565.5px;width:62.5px">25.434,72</div>
</div>
<div class="row" style="top:390.7px;height:11.3px">
<svg class="ei" style="top:0.1px" viewBox="0 0 10 10"><rect x=".4" y=".4" width="9.2" height="9.2" fill="#fffaf4" stroke="#fbdcbf" stroke-width=".8"/><rect x="3.8" y="1.5" width="2.4" height="2.2" fill="#f1a767"/><rect x="2.1" y="4.1" width="2.5" height="2.2" fill="#f2ad72"/><rect x="5.4" y="4.1" width="2.5" height="2.2" fill="#f2ad72"/><rect x="1" y="6.8" width="2.3" height="2" fill="#f6c59c"/><rect x="3.85" y="6.8" width="2.3" height="2" fill="#f6c59c"/><rect x="6.7" y="6.8" width="2.3" height="2" fill="#f6c59c"/></svg>
<div class="nm">Außenwand, Kelleraußentür, Fichte, 1000x2000 mm</div>
<div class="num" style="left:431.0px;width:50.0px">3,000</div>
<div class="unit" style="left:481.0px">St</div>
<div class="num" style="left:512.5px;width:53.0px">1.255,73</div>
<div class="num" style="left:565.5px;width:62.5px">3.767,18</div>
</div>
<div class="row" style="top:402.0px;height:20.0px">
<svg class="ei" style="top:4.5px" viewBox="0 0 10 10"><rect x=".5" y=".5" width="9" height="9" fill="#fff6ec" stroke="#f8d2ae"/><rect x="3.6" y="1.8" width="2.8" height="2.4" fill="none" stroke="#f0a868" stroke-width=".8"/><rect x="1.8" y="5.8" width="2.4" height="2.2" fill="none" stroke="#f0a868" stroke-width=".8"/><rect x="5.8" y="5.8" width="2.4" height="2.2" fill="none" stroke="#f0a868" stroke-width=".8"/><path d="M5 4.2V5.2M3 5.8V5.2H7V5.8" fill="none" stroke="#f0a868" stroke-width=".6"/></svg>
<div class="nm">Innenwandkonstruktion aus Porenbeton, Planstein 4-0,6, d=17,5 cm+5 cm Mineralwolle in der<br>Trennfuge, als Haustrennwand, einseitig Kalkgipsputz mit Dispersionsbeschichtung</div>
<div class="num" style="left:431.0px;width:50.0px">506,975</div>
<div class="unit" style="left:481.0px">m²</div>
<div class="num" style="left:512.5px;width:53.0px">111,48</div>
<div class="num" style="left:565.5px;width:62.5px">56.518,54</div>
</div>
<div class="row" style="top:422.0px;height:20.0px">
<svg class="ei" style="top:4.5px" viewBox="0 0 10 10"><rect x=".5" y=".5" width="9" height="9" fill="#fff6ec" stroke="#f8d2ae"/><rect x="3.6" y="1.8" width="2.8" height="2.4" fill="none" stroke="#f0a868" stroke-width=".8"/><rect x="1.8" y="5.8" width="2.4" height="2.2" fill="none" stroke="#f0a868" stroke-width=".8"/><rect x="5.8" y="5.8" width="2.4" height="2.2" fill="none" stroke="#f0a868" stroke-width=".8"/><path d="M5 4.2V5.2M3 5.8V5.2H7V5.8" fill="none" stroke="#f0a868" stroke-width=".6"/></svg>
<div class="nm">Innenwandkonstruktion aus Ziegel, Hochlochziegel 12/0,9, d=11,5 cm, Kalkgipsputz und<br>Kalkzementputz mit Dispersionsbeschichtung</div>
<div class="num" style="left:431.0px;width:50.0px">521,460</div>
<div class="unit" style="left:481.0px">m²</div>
<div class="num" style="left:512.5px;width:53.0px">108,21</div>
<div class="num" style="left:565.5px;width:62.5px">56.429,75</div>
</div>
<div class="row" style="top:442.0px;height:20.0px">
<svg class="ei" style="top:4.5px" viewBox="0 0 10 10"><rect x=".5" y=".5" width="9" height="9" fill="#fff6ec" stroke="#f8d2ae"/><rect x="3.6" y="1.8" width="2.8" height="2.4" fill="none" stroke="#f0a868" stroke-width=".8"/><rect x="1.8" y="5.8" width="2.4" height="2.2" fill="none" stroke="#f0a868" stroke-width=".8"/><rect x="5.8" y="5.8" width="2.4" height="2.2" fill="none" stroke="#f0a868" stroke-width=".8"/><path d="M5 4.2V5.2M3 5.8V5.2H7V5.8" fill="none" stroke="#f0a868" stroke-width=".6"/></svg>
<div class="nm">Innenwandkonstruktion aus Ziegel, Hochlochziegel 12/0,9, d=24 cm, je eine Seite Kalkgipsputz mit<br>Dispersionsbeschichtung und Kalkzementputz mit Fliesen</div>
<div class="num" style="left:431.0px;width:50.0px">1.665,775</div>
<div class="unit" style="left:481.0px">m²</div>
<div class="num" style="left:512.5px;width:53.0px">205,29</div>
<div class="num" style="left:565.5px;width:62.5px">341.960,95</div>
</div>
<div class="row" style="top:462.0px;height:20.3px">
<svg class="ei" style="top:4.6px" viewBox="0 0 10 10"><rect x=".5" y=".5" width="9" height="9" fill="#fff6ec" stroke="#f8d2ae"/><rect x="3.6" y="1.8" width="2.8" height="2.4" fill="none" stroke="#f0a868" stroke-width=".8"/><rect x="1.8" y="5.8" width="2.4" height="2.2" fill="none" stroke="#f0a868" stroke-width=".8"/><rect x="5.8" y="5.8" width="2.4" height="2.2" fill="none" stroke="#f0a868" stroke-width=".8"/><path d="M5 4.2V5.2M3 5.8V5.2H7V5.8" fill="none" stroke="#f0a868" stroke-width=".6"/></svg>
<div class="nm">Innenwandkonstruktion aus WC-Tür, Tür mit und ohne Oberlicht, mit Holztürblättern aus Fichte in<br>Holzumfassungszargen, gewachst</div>
<div class="num" style="left:431.0px;width:50.0px">90,000</div>
<div class="unit" style="left:481.0px">St</div>
<div class="num" style="left:512.5px;width:53.0px">731,32</div>
<div class="num" style="left:565.5px;width:62.5px">65.818,88</div>
</div>
<div class="row" style="top:482.3px;height:20.1px">
<svg class="ei" style="top:4.6px" viewBox="0 0 10 10"><rect x=".5" y=".5" width="9" height="9" fill="#fff6ec" stroke="#f8d2ae"/><rect x="3.6" y="1.8" width="2.8" height="2.4" fill="none" stroke="#f0a868" stroke-width=".8"/><rect x="1.8" y="5.8" width="2.4" height="2.2" fill="none" stroke="#f0a868" stroke-width=".8"/><rect x="5.8" y="5.8" width="2.4" height="2.2" fill="none" stroke="#f0a868" stroke-width=".8"/><path d="M5 4.2V5.2M3 5.8V5.2H7V5.8" fill="none" stroke="#f0a868" stroke-width=".6"/></svg>
<div class="nm">Innenwandkonstruktion als Wohnungstüren aus Holztürblatt in Stahlumfassungszarge,<br>kunststoffbeschichtet und Holztür in Holzumfassungszarge gewachst</div>
<div class="num" style="left:431.0px;width:50.0px">23,000</div>
<div class="unit" style="left:481.0px">St</div>
<div class="num" style="left:512.5px;width:53.0px">1.139,76</div>
<div class="num" style="left:565.5px;width:62.5px">26.214,37</div>
</div>
<div class="row" style="top:502.4px;height:20.2px">
<svg class="ei" style="top:4.6px" viewBox="0 0 10 10"><rect x=".4" y=".4" width="9.2" height="9.2" fill="#fffaf4" stroke="#fbdcbf" stroke-width=".8"/><rect x="3.8" y="1.5" width="2.4" height="2.2" fill="#f1a767"/><rect x="2.1" y="4.1" width="2.5" height="2.2" fill="#f2ad72"/><rect x="5.4" y="4.1" width="2.5" height="2.2" fill="#f2ad72"/><rect x="1" y="6.8" width="2.3" height="2" fill="#f6c59c"/><rect x="3.85" y="6.8" width="2.3" height="2" fill="#f6c59c"/><rect x="6.7" y="6.8" width="2.3" height="2" fill="#f6c59c"/></svg>
<div class="nm">Innentür aus Stahl, T 30, mit Stahleckzarge, kunststoffbeschichtet, 875x2000 mm, mit<br>Obertürschliesser</div>
<div class="num" style="left:431.0px;width:50.0px">12,000</div>
<div class="unit" style="left:481.0px">St</div>
<div class="num" style="left:512.5px;width:53.0px">1.355,84</div>
<div class="num" style="left:565.5px;width:62.5px">16.270,09</div>
</div>
<div class="row" style="top:522.6px;height:6px"><svg class="ei" style="top:1px" viewBox="0 0 10 10"><rect x=".4" y=".4" width="9.2" height="9.2" fill="#fffaf4" stroke="#fbdcbf" stroke-width=".8"/><rect x="3.8" y="1.5" width="2.4" height="2.2" fill="#f1a767"/><rect x="2.1" y="4.1" width="2.5" height="2.2" fill="#f2ad72"/><rect x="5.4" y="4.1" width="2.5" height="2.2" fill="#f2ad72"/><rect x="1" y="6.8" width="2.3" height="2" fill="#f6c59c"/><rect x="3.85" y="6.8" width="2.3" height="2" fill="#f6c59c"/><rect x="6.7" y="6.8" width="2.3" height="2" fill="#f6c59c"/></svg></div>
</div>
<div id="tfoot">
<div class="frow" style="top:0.3px"><div class="fl">Summe Projekt (Netto)</div><div class="fv">3.507.807,93</div></div>
<div class="frow" style="top:11.4px"><div class="fl">Umsatzsteuer 19%</div><div class="fv">666.483,51</div></div>
<div class="frow" style="top:22.4px"><div class="fl">Summe Projekt (Brutto)</div><div class="fv">4.174.291,44</div></div>
<div class="fvl" style="left:431.4px"></div>
<div class="fvl" style="left:481.4px"></div>
<div class="fvl" style="left:512.9px"></div>
<div class="fvl" style="left:565.9px"></div>
</div>
<div id="msb"><div class="sbup"></div><div class="sbthumb" style="top:11px;height:179px"><div class="grip"></div></div><div class="sbdn"></div></div>
<div id="tframe"></div>
<div id="ctx"><div class="gut"></div><div class="sel"></div>
<div class="it" style="top:3.2px">Bearbeiten</div>
<div class="it" style="top:17.1px">Element austauschen</div>
<div class="it" style="top:31.4px">Baumansicht</div>
<div style="left:93px;top:34px;border:2.2px solid transparent;border-right:none;border-left:2.6px solid #111"></div>
</div>

</div>
<div id="right"><svg style="width:0;height:0"><defs><linearGradient id="fg" x1="0" y1="0" x2="0" y2="1"><stop offset="0" stop-color="#fff3d6"/><stop offset=".35" stop-color="#fdebc4"/><stop offset="1" stop-color="#f3c680"/></linearGradient></defs></svg>
<div id="rhead"><div class="rh" style="left:0;width:254px">Text</div><div class="rh" style="left:254px;width:49.5px">Mittelpreis</div><div class="rh" style="left:303.5px;width:38.4px">U-Wert</div></div>
<div class="tr" style="top:10.2px"><div class="pm plus" style="left:1.5px"></div><svg class="fo" style="left:13.5px" viewBox="0 0 10 8"><path d="M.5 1.8Q.5 .6 1.6 .6H3.6L4.6 1.6H8.6Q9.5 1.6 9.5 2.5V6.6Q9.5 7.5 8.6 7.5H1.4Q.5 7.5 .5 6.6Z" fill="url(#fg)" stroke="#dcaa5a" stroke-width=".8"/><path d="M1 7.5H9" stroke="#cf943c" stroke-width=".5"/></svg><div class="tt" style="left:27.0px">1120 Grundstücksnebenkosten</div></div>
<div class="tr" style="top:21.4px"><div class="pm plus" style="left:1.5px"></div><svg class="fo" style="left:13.5px" viewBox="0 0 10 8"><path d="M.5 1.8Q.5 .6 1.6 .6H3.6L4.6 1.6H8.6Q9.5 1.6 9.5 2.5V6.6Q9.5 7.5 8.6 7.5H1.4Q.5 7.5 .5 6.6Z" fill="url(#fg)" stroke="#dcaa5a" stroke-width=".8"/><path d="M1 7.5H9" stroke="#cf943c" stroke-width=".5"/></svg><div class="tt" style="left:27.0px">1210 Herrichten</div></div>
<div class="tr" style="top:32.6px"><div class="pm plus" style="left:1.5px"></div><svg class="fo" style="left:13.5px" viewBox="0 0 10 8"><path d="M.5 1.8Q.5 .6 1.6 .6H3.6L4.6 1.6H8.6Q9.5 1.6 9.5 2.5V6.6Q9.5 7.5 8.6 7.5H1.4Q.5 7.5 .5 6.6Z" fill="url(#fg)" stroke="#dcaa5a" stroke-width=".8"/><path d="M1 7.5H9" stroke="#cf943c" stroke-width=".5"/></svg><div class="tt" style="left:27.0px">1300 Bauwerk - Baukonstruktion</div></div>
<div class="tr" style="top:43.8px"><div class="pm plus" style="left:1.5px"></div><svg class="fo" style="left:13.5px" viewBox="0 0 10 8"><path d="M.5 1.8Q.5 .6 1.6 .6H3.6L4.6 1.6H8.6Q9.5 1.6 9.5 2.5V6.6Q9.5 7.5 8.6 7.5H1.4Q.5 7.5 .5 6.6Z" fill="url(#fg)" stroke="#dcaa5a" stroke-width=".8"/><path d="M1 7.5H9" stroke="#cf943c" stroke-width=".5"/></svg><div class="tt" style="left:27.0px">1310 Baugrube</div></div>
<div class="tr" style="top:55.0px"><div class="pm plus" style="left:1.5px"></div><svg class="fo" style="left:13.5px" viewBox="0 0 10 8"><path d="M.5 1.8Q.5 .6 1.6 .6H3.6L4.6 1.6H8.6Q9.5 1.6 9.5 2.5V6.6Q9.5 7.5 8.6 7.5H1.4Q.5 7.5 .5 6.6Z" fill="url(#fg)" stroke="#dcaa5a" stroke-width=".8"/><path d="M1 7.5H9" stroke="#cf943c" stroke-width=".5"/></svg><div class="tt" style="left:27.0px">1320 Gründung</div></div>
<div class="tr" style="top:66.2px"><div class="pm minus" style="left:1.5px"></div><svg class="fo" style="left:13.5px" viewBox="0 0 10 8"><path d="M.5 1.8Q.5 .6 1.6 .6H3.6L4.6 1.6H7.8Q8.6 1.6 8.6 2.5V7.4H.5Z" fill="#f2c678" stroke="#d79a45" stroke-width=".85"/><path d="M1.6 3.6H9.7L8.6 7.5H.6Z" fill="#fde4b0" stroke="#d79a45" stroke-width=".85"/></svg><div class="tt" style="left:27.0px">1330 Außenwände</div></div>
<div class="tr" style="top:77.4px"><div class="pm plus" style="left:8.0px"></div><svg class="fo" style="left:20.0px" viewBox="0 0 10 8"><path d="M.5 1.8Q.5 .6 1.6 .6H3.6L4.6 1.6H8.6Q9.5 1.6 9.5 2.5V6.6Q9.5 7.5 8.6 7.5H1.4Q.5 7.5 .5 6.6Z" fill="url(#fg)" stroke="#dcaa5a" stroke-width=".8"/><path d="M1 7.5H9" stroke="#cf943c" stroke-width=".5"/></svg><div class="tt" style="left:33.5px">330 Außenwände</div></div>
<div class="tr" style="top:88.6px"><div class="pm plus" style="left:8.0px"></div><svg class="fo" style="left:20.0px" viewBox="0 0 10 8"><path d="M.5 1.8Q.5 .6 1.6 .6H3.6L4.6 1.6H8.6Q9.5 1.6 9.5 2.5V6.6Q9.5 7.5 8.6 7.5H1.4Q.5 7.5 .5 6.6Z" fill="url(#fg)" stroke="#dcaa5a" stroke-width=".8"/><path d="M1 7.5H9" stroke="#cf943c" stroke-width=".5"/></svg><div class="tt" style="left:33.5px">331 Tragende Außenwände</div></div>
<div class="tr" style="top:99.8px"><div class="pm plus" style="left:8.0px"></div><svg class="fo" style="left:20.0px" viewBox="0 0 10 8"><path d="M.5 1.8Q.5 .6 1.6 .6H3.6L4.6 1.6H8.6Q9.5 1.6 9.5 2.5V6.6Q9.5 7.5 8.6 7.5H1.4Q.5 7.5 .5 6.6Z" fill="url(#fg)" stroke="#dcaa5a" stroke-width=".8"/><path d="M1 7.5H9" stroke="#cf943c" stroke-width=".5"/></svg><div class="tt" style="left:33.5px">332 Nichttragende Außenwände</div></div>
<div class="tr" style="top:111.0px"><div class="pm plus" style="left:8.0px"></div><svg class="fo" style="left:20.0px" viewBox="0 0 10 8"><path d="M.5 1.8Q.5 .6 1.6 .6H3.6L4.6 1.6H8.6Q9.5 1.6 9.5 2.5V6.6Q9.5 7.5 8.6 7.5H1.4Q.5 7.5 .5 6.6Z" fill="url(#fg)" stroke="#dcaa5a" stroke-width=".8"/><path d="M1 7.5H9" stroke="#cf943c" stroke-width=".5"/></svg><div class="tt" style="left:33.5px">333 Außenstützen</div></div>
<div class="tr" style="top:122.2px"><div class="pm minus" style="left:8.0px"></div><svg class="fo" style="left:20.0px" viewBox="0 0 10 8"><path d="M.5 1.8Q.5 .6 1.6 .6H3.6L4.6 1.6H7.8Q8.6 1.6 8.6 2.5V7.4H.5Z" fill="#f2c678" stroke="#d79a45" stroke-width=".85"/><path d="M1.6 3.6H9.7L8.6 7.5H.6Z" fill="#fde4b0" stroke="#d79a45" stroke-width=".85"/></svg><div class="tt" style="left:33.5px">334 Außentüren und -fenster</div></div>
<div class="tr" style="top:133.4px"><div class="pm plus" style="left:14.5px"></div><svg class="fo" style="left:26.5px" viewBox="0 0 10 8"><path d="M.5 1.8Q.5 .6 1.6 .6H3.6L4.6 1.6H8.6Q9.5 1.6 9.5 2.5V6.6Q9.5 7.5 8.6 7.5H1.4Q.5 7.5 .5 6.6Z" fill="url(#fg)" stroke="#dcaa5a" stroke-width=".8"/><path d="M1 7.5H9" stroke="#cf943c" stroke-width=".5"/></svg><div class="tt" style="left:40.0px">334.1 Türen</div></div>
<div class="tr" style="top:144.6px"><div class="pm plus" style="left:14.5px"></div><svg class="fo" style="left:26.5px" viewBox="0 0 10 8"><path d="M.5 1.8Q.5 .6 1.6 .6H3.6L4.6 1.6H8.6Q9.5 1.6 9.5 2.5V6.6Q9.5 7.5 8.6 7.5H1.4Q.5 7.5 .5 6.6Z" fill="url(#fg)" stroke="#dcaa5a" stroke-width=".8"/><path d="M1 7.5H9" stroke="#cf943c" stroke-width=".5"/></svg><div class="tt" style="left:40.0px">334.2 Fenstertüren</div></div>
<div class="tr" style="top:155.8px"><div class="pm plus" style="left:14.5px"></div><svg class="fo" style="left:26.5px" viewBox="0 0 10 8"><path d="M.5 1.8Q.5 .6 1.6 .6H3.6L4.6 1.6H8.6Q9.5 1.6 9.5 2.5V6.6Q9.5 7.5 8.6 7.5H1.4Q.5 7.5 .5 6.6Z" fill="url(#fg)" stroke="#dcaa5a" stroke-width=".8"/><path d="M1 7.5H9" stroke="#cf943c" stroke-width=".5"/></svg><div class="tt" style="left:40.0px">334.3 Türen, NWB</div></div>
<div class="tr" style="top:167.0px"><div class="pm plus" style="left:14.5px"></div><svg class="fo" style="left:26.5px" viewBox="0 0 10 8"><path d="M.5 1.8Q.5 .6 1.6 .6H3.6L4.6 1.6H8.6Q9.5 1.6 9.5 2.5V6.6Q9.5 7.5 8.6 7.5H1.4Q.5 7.5 .5 6.6Z" fill="url(#fg)" stroke="#dcaa5a" stroke-width=".8"/><path d="M1 7.5H9" stroke="#cf943c" stroke-width=".5"/></svg><div class="tt" style="left:40.0px">334.4 Tore</div></div>
<div class="tr" style="top:178.2px"><div class="pm plus" style="left:14.5px"></div><svg class="fo" style="left:26.5px" viewBox="0 0 10 8"><path d="M.5 1.8Q.5 .6 1.6 .6H3.6L4.6 1.6H8.6Q9.5 1.6 9.5 2.5V6.6Q9.5 7.5 8.6 7.5H1.4Q.5 7.5 .5 6.6Z" fill="url(#fg)" stroke="#dcaa5a" stroke-width=".8"/><path d="M1 7.5H9" stroke="#cf943c" stroke-width=".5"/></svg><div class="tt" style="left:40.0px">334.5 Fenster</div></div>
<div class="tr" style="top:189.4px"><div class="pm plus" style="left:14.5px"></div><svg class="fo" style="left:26.5px" viewBox="0 0 10 8"><path d="M.5 1.8Q.5 .6 1.6 .6H3.6L4.6 1.6H8.6Q9.5 1.6 9.5 2.5V6.6Q9.5 7.5 8.6 7.5H1.4Q.5 7.5 .5 6.6Z" fill="url(#fg)" stroke="#dcaa5a" stroke-width=".8"/><path d="M1 7.5H9" stroke="#cf943c" stroke-width=".5"/></svg><div class="tt" style="left:40.0px">334.6 Sonderfenster</div></div>
<div class="tr" style="top:200.6px"><div class="pm plus" style="left:14.5px"></div><svg class="fo" style="left:26.5px" viewBox="0 0 10 8"><path d="M.5 1.8Q.5 .6 1.6 .6H3.6L4.6 1.6H8.6Q9.5 1.6 9.5 2.5V6.6Q9.5 7.5 8.6 7.5H1.4Q.5 7.5 .5 6.6Z" fill="url(#fg)" stroke="#dcaa5a" stroke-width=".8"/><path d="M1 7.5H9" stroke="#cf943c" stroke-width=".5"/></svg><div class="tt" style="left:40.0px">334.8 Schaufenster</div></div>
<div class="tr" style="top:211.8px"><div class="pm minus" style="left:14.5px"></div><svg class="fo" style="left:26.5px" viewBox="0 0 10 8"><path d="M.5 1.8Q.5 .6 1.6 .6H3.6L4.6 1.6H7.8Q8.6 1.6 8.6 2.5V7.4H.5Z" fill="#f2c678" stroke="#d79a45" stroke-width=".85"/><path d="M1.6 3.6H9.7L8.6 7.5H.6Z" fill="#fde4b0" stroke="#d79a45" stroke-width=".85"/></svg><div class="tt" style="left:40.0px">334.9 Sonstige Außentüren, -fenster</div></div>
<div class="er" style="top:223.0px;height:20.0px">
<svg class="ei" style="top:5.3px" viewBox="0 0 10 10"><rect x=".4" y=".4" width="9.2" height="9.2" fill="#fffaf4" stroke="#fbdcbf" stroke-width=".8"/><rect x="3.8" y="1.5" width="2.4" height="2.2" fill="#f1a767"/><rect x="2.1" y="4.1" width="2.5" height="2.2" fill="#f2ad72"/><rect x="5.4" y="4.1" width="2.5" height="2.2" fill="#f2ad72"/><rect x="1" y="6.8" width="2.3" height="2" fill="#f6c59c"/><rect x="3.85" y="6.8" width="2.3" height="2" fill="#f6c59c"/><rect x="6.7" y="6.8" width="2.3" height="2" fill="#f6c59c"/></svg>
<div class="et">AW Kellerfenster Holz, Isolierverglasung,<br>Fertigteil-Lichtschacht, 100x80 cm</div>
<div class="mp">627,86</div><div class="uw">1,20</div></div>
<div class="er" style="top:243.0px;height:20.0px">
<svg class="ei" style="top:5.3px" viewBox="0 0 10 10"><rect x=".4" y=".4" width="9.2" height="9.2" fill="#fffaf4" stroke="#fbdcbf" stroke-width=".8"/><rect x="3.8" y="1.5" width="2.4" height="2.2" fill="#f1a767"/><rect x="2.1" y="4.1" width="2.5" height="2.2" fill="#f2ad72"/><rect x="5.4" y="4.1" width="2.5" height="2.2" fill="#f2ad72"/><rect x="1" y="6.8" width="2.3" height="2" fill="#f6c59c"/><rect x="3.85" y="6.8" width="2.3" height="2" fill="#f6c59c"/><rect x="6.7" y="6.8" width="2.3" height="2" fill="#f6c59c"/></svg>
<div class="et">AW Kellerfenster Stahl/PVC, Isolierverglasung,<br>KST-Lichtschacht, 80x60 cm</div>
<div class="mp">491,42</div><div class="uw">1,11</div></div>
<div class="er" style="top:263.0px;height:20.0px">
<svg class="ei" style="top:5.3px" viewBox="0 0 10 10"><rect x=".4" y=".4" width="9.2" height="9.2" fill="#fffaf4" stroke="#fbdcbf" stroke-width=".8"/><rect x="3.8" y="1.5" width="2.4" height="2.2" fill="#f1a767"/><rect x="2.1" y="4.1" width="2.5" height="2.2" fill="#f2ad72"/><rect x="5.4" y="4.1" width="2.5" height="2.2" fill="#f2ad72"/><rect x="1" y="6.8" width="2.3" height="2" fill="#f6c59c"/><rect x="3.85" y="6.8" width="2.3" height="2" fill="#f6c59c"/><rect x="6.7" y="6.8" width="2.3" height="2" fill="#f6c59c"/></svg>
<div class="et">AW Kellerfenster Kunststoff, Isolierverglasung,<br>FT-Lichtschacht, 100x60 cm</div>
<div class="mp">641,39</div><div class="uw">1,11</div></div>
<div class="er" style="top:283.0px;height:11.3px">
<svg class="ei" style="top:1.0px" viewBox="0 0 10 10"><rect x=".4" y=".4" width="9.2" height="9.2" fill="#fffaf4" stroke="#fbdcbf" stroke-width=".8"/><rect x="3.8" y="1.5" width="2.4" height="2.2" fill="#f1a767"/><rect x="2.1" y="4.1" width="2.5" height="2.2" fill="#f2ad72"/><rect x="5.4" y="4.1" width="2.5" height="2.2" fill="#f2ad72"/><rect x="1" y="6.8" width="2.3" height="2" fill="#f6c59c"/><rect x="3.85" y="6.8" width="2.3" height="2" fill="#f6c59c"/><rect x="6.7" y="6.8" width="2.3" height="2" fill="#f6c59c"/></svg>
<div class="et">AW Kellerfenster Stahl, KST-Lichtschacht, 80x60 cm</div>
<div class="mp">341,00</div><div class="uw">5,74</div></div>
<div class="er sel" style="top:294.3px;height:20.0px">
<svg class="ei" style="top:5.3px" viewBox="0 0 10 10"><rect x=".4" y=".4" width="9.2" height="9.2" fill="#fffaf4" stroke="#fbdcbf" stroke-width=".8"/><rect x="3.8" y="1.5" width="2.4" height="2.2" fill="#f1a767"/><rect x="2.1" y="4.1" width="2.5" height="2.2" fill="#f2ad72"/><rect x="5.4" y="4.1" width="2.5" height="2.2" fill="#f2ad72"/><rect x="1" y="6.8" width="2.3" height="2" fill="#f6c59c"/><rect x="3.85" y="6.8" width="2.3" height="2" fill="#f6c59c"/><rect x="6.7" y="6.8" width="2.3" height="2" fill="#f6c59c"/></svg>
<div class="et">AW Kellerfenster Stahl, Fertigteil-Lichtschacht,<br>100x80 cm</div>
<div class="mp">521,72</div><div class="uw">5,74</div></div>
<div class="er" style="top:314.3px;height:11.3px">
<svg class="ei" style="top:1.0px" viewBox="0 0 10 10"><rect x=".4" y=".4" width="9.2" height="9.2" fill="#fffaf4" stroke="#fbdcbf" stroke-width=".8"/><rect x="3.8" y="1.5" width="2.4" height="2.2" fill="#f1a767"/><rect x="2.1" y="4.1" width="2.5" height="2.2" fill="#f2ad72"/><rect x="5.4" y="4.1" width="2.5" height="2.2" fill="#f2ad72"/><rect x="1" y="6.8" width="2.3" height="2" fill="#f6c59c"/><rect x="3.85" y="6.8" width="2.3" height="2" fill="#f6c59c"/><rect x="6.7" y="6.8" width="2.3" height="2" fill="#f6c59c"/></svg>
<div class="et">AW Kellerfenster Stahl, 80x60 cm</div>
<div class="mp">188,40</div><div class="uw">5,74</div></div>
<div class="er" style="top:325.6px;height:11.3px">
<svg class="ei" style="top:1.0px" viewBox="0 0 10 10"><rect x=".4" y=".4" width="9.2" height="9.2" fill="#fffaf4" stroke="#fbdcbf" stroke-width=".8"/><rect x="3.8" y="1.5" width="2.4" height="2.2" fill="#f1a767"/><rect x="2.1" y="4.1" width="2.5" height="2.2" fill="#f2ad72"/><rect x="5.4" y="4.1" width="2.5" height="2.2" fill="#f2ad72"/><rect x="1" y="6.8" width="2.3" height="2" fill="#f6c59c"/><rect x="3.85" y="6.8" width="2.3" height="2" fill="#f6c59c"/><rect x="6.7" y="6.8" width="2.3" height="2" fill="#f6c59c"/></svg>
<div class="et">AW TG-Lüftungsgitter, Alulamellen, 1400x700 mm</div>
<div class="mp">539,79</div><div class="uw"></div></div>
<div class="er" style="top:336.9px;height:11.3px">
<svg class="ei" style="top:1.0px" viewBox="0 0 10 10"><rect x=".4" y=".4" width="9.2" height="9.2" fill="#fffaf4" stroke="#fbdcbf" stroke-width=".8"/><rect x="3.8" y="1.5" width="2.4" height="2.2" fill="#f1a767"/><rect x="2.1" y="4.1" width="2.5" height="2.2" fill="#f2ad72"/><rect x="5.4" y="4.1" width="2.5" height="2.2" fill="#f2ad72"/><rect x="1" y="6.8" width="2.3" height="2" fill="#f6c59c"/><rect x="3.85" y="6.8" width="2.3" height="2" fill="#f6c59c"/><rect x="6.7" y="6.8" width="2.3" height="2" fill="#f6c59c"/></svg>
<div class="et">AW Kellerfenster Aluminium, 1400x700 mm, Uw ca.</div>
<div class="mp">731,48</div><div class="uw">1,66</div></div>
<div class="er" style="top:348.2px;height:20.0px">
<svg class="ei" style="top:5.3px" viewBox="0 0 10 10"><rect x=".4" y=".4" width="9.2" height="9.2" fill="#fffaf4" stroke="#fbdcbf" stroke-width=".8"/><rect x="3.8" y="1.5" width="2.4" height="2.2" fill="#f1a767"/><rect x="2.1" y="4.1" width="2.5" height="2.2" fill="#f2ad72"/><rect x="5.4" y="4.1" width="2.5" height="2.2" fill="#f2ad72"/><rect x="1" y="6.8" width="2.3" height="2" fill="#f6c59c"/><rect x="3.85" y="6.8" width="2.3" height="2" fill="#f6c59c"/><rect x="6.7" y="6.8" width="2.3" height="2" fill="#f6c59c"/></svg>
<div class="et">AW Lüftungsklappen Holz, 60 x 240 cm, MW 25<br>mm, Oberfläche lasiert</div>
<div class="mp">841,49</div><div class="uw">0,85</div></div>
<div class="er" style="top:368.2px;height:20.0px">
<svg class="ei" style="top:5.3px" viewBox="0 0 10 10"><rect x=".4" y=".4" width="9.2" height="9.2" fill="#fffaf4" stroke="#fbdcbf" stroke-width=".8"/><rect x="3.8" y="1.5" width="2.4" height="2.2" fill="#f1a767"/><rect x="2.1" y="4.1" width="2.5" height="2.2" fill="#f2ad72"/><rect x="5.4" y="4.1" width="2.5" height="2.2" fill="#f2ad72"/><rect x="1" y="6.8" width="2.3" height="2" fill="#f6c59c"/><rect x="3.85" y="6.8" width="2.3" height="2" fill="#f6c59c"/><rect x="6.7" y="6.8" width="2.3" height="2" fill="#f6c59c"/></svg>
<div class="et">AW Lüftungsklappen Holz, 60 x 150 cm, MW 25<br>mm, Oberfläche lasiert</div>
<div class="mp">667,39</div><div class="uw">0,85</div></div>
<div class="tr" style="top:388.5px"><div class="pm plus" style="left:8.0px"></div><svg class="fo" style="left:20.0px" viewBox="0 0 10 8"><path d="M.5 1.8Q.5 .6 1.6 .6H3.6L4.6 1.6H8.6Q9.5 1.6 9.5 2.5V6.6Q9.5 7.5 8.6 7.5H1.4Q.5 7.5 .5 6.6Z" fill="url(#fg)" stroke="#dcaa5a" stroke-width=".8"/><path d="M1 7.5H9" stroke="#cf943c" stroke-width=".5"/></svg><div class="tt" style="left:33.5px">335 Außenwandbekleidungen außen</div></div>
<div class="tr" style="top:399.7px"><div class="pm plus" style="left:8.0px"></div><svg class="fo" style="left:20.0px" viewBox="0 0 10 8"><path d="M.5 1.8Q.5 .6 1.6 .6H3.6L4.6 1.6H8.6Q9.5 1.6 9.5 2.5V6.6Q9.5 7.5 8.6 7.5H1.4Q.5 7.5 .5 6.6Z" fill="url(#fg)" stroke="#dcaa5a" stroke-width=".8"/><path d="M1 7.5H9" stroke="#cf943c" stroke-width=".5"/></svg><div class="tt" style="left:33.5px">336 Außenwandbekleidungen innen</div></div>
<div class="tr" style="top:410.9px"><div class="pm plus" style="left:8.0px"></div><svg class="fo" style="left:20.0px" viewBox="0 0 10 8"><path d="M.5 1.8Q.5 .6 1.6 .6H3.6L4.6 1.6H8.6Q9.5 1.6 9.5 2.5V6.6Q9.5 7.5 8.6 7.5H1.4Q.5 7.5 .5 6.6Z" fill="url(#fg)" stroke="#dcaa5a" stroke-width=".8"/><path d="M1 7.5H9" stroke="#cf943c" stroke-width=".5"/></svg><div class="tt" style="left:33.5px">337 Elementierte Außenwände</div></div>
<div class="tr" style="top:422.2px"><div class="pm plus" style="left:8.0px"></div><svg class="fo" style="left:20.0px" viewBox="0 0 10 8"><path d="M.5 1.8Q.5 .6 1.6 .6H3.6L4.6 1.6H8.6Q9.5 1.6 9.5 2.5V6.6Q9.5 7.5 8.6 7.5H1.4Q.5 7.5 .5 6.6Z" fill="url(#fg)" stroke="#dcaa5a" stroke-width=".8"/><path d="M1 7.5H9" stroke="#cf943c" stroke-width=".5"/></svg><div class="tt" style="left:33.5px">338 Sonnenschutz</div></div>
<div class="tr" style="top:433.4px"><div class="pm plus" style="left:8.0px"></div><svg class="fo" style="left:20.0px" viewBox="0 0 10 8"><path d="M.5 1.8Q.5 .6 1.6 .6H3.6L4.6 1.6H8.6Q9.5 1.6 9.5 2.5V6.6Q9.5 7.5 8.6 7.5H1.4Q.5 7.5 .5 6.6Z" fill="url(#fg)" stroke="#dcaa5a" stroke-width=".8"/><path d="M1 7.5H9" stroke="#cf943c" stroke-width=".5"/></svg><div class="tt" style="left:33.5px">339 Außenwände, sonstige</div></div>
<div class="tr" style="top:444.6px"><div class="pm plus" style="left:1.5px"></div><svg class="fo" style="left:13.5px" viewBox="0 0 10 8"><path d="M.5 1.8Q.5 .6 1.6 .6H3.6L4.6 1.6H8.6Q9.5 1.6 9.5 2.5V6.6Q9.5 7.5 8.6 7.5H1.4Q.5 7.5 .5 6.6Z" fill="url(#fg)" stroke="#dcaa5a" stroke-width=".8"/><path d="M1 7.5H9" stroke="#cf943c" stroke-width=".5"/></svg><div class="tt" style="left:27.0px">1340 Innenwände</div></div>
<div class="tr" style="top:455.8px"><div class="pm plus" style="left:1.5px"></div><svg class="fo" style="left:13.5px" viewBox="0 0 10 8"><path d="M.5 1.8Q.5 .6 1.6 .6H3.6L4.6 1.6H8.6Q9.5 1.6 9.5 2.5V6.6Q9.5 7.5 8.6 7.5H1.4Q.5 7.5 .5 6.6Z" fill="url(#fg)" stroke="#dcaa5a" stroke-width=".8"/><path d="M1 7.5H9" stroke="#cf943c" stroke-width=".5"/></svg><div class="tt" style="left:27.0px">1350 Decken</div></div>
<div class="tr" style="top:467.0px"><div class="pm plus" style="left:1.5px"></div><svg class="fo" style="left:13.5px" viewBox="0 0 10 8"><path d="M.5 1.8Q.5 .6 1.6 .6H3.6L4.6 1.6H8.6Q9.5 1.6 9.5 2.5V6.6Q9.5 7.5 8.6 7.5H1.4Q.5 7.5 .5 6.6Z" fill="url(#fg)" stroke="#dcaa5a" stroke-width=".8"/><path d="M1 7.5H9" stroke="#cf943c" stroke-width=".5"/></svg><div class="tt" style="left:27.0px">1360 Dächer</div></div>
<div class="tr" style="top:478.3px"><div class="pm plus" style="left:1.5px"></div><svg class="fo" style="left:13.5px" viewBox="0 0 10 8"><path d="M.5 1.8Q.5 .6 1.6 .6H3.6L4.6 1.6H8.6Q9.5 1.6 9.5 2.5V6.6Q9.5 7.5 8.6 7.5H1.4Q.5 7.5 .5 6.6Z" fill="url(#fg)" stroke="#dcaa5a" stroke-width=".8"/><path d="M1 7.5H9" stroke="#cf943c" stroke-width=".5"/></svg><div class="tt" style="left:27.0px">1370 Baukonstruktive Einbauten</div></div>
<div class="tr" style="top:489.5px"><div class="pm plus" style="left:1.5px"></div><svg class="fo" style="left:13.5px" viewBox="0 0 10 8"><path d="M.5 1.8Q.5 .6 1.6 .6H3.6L4.6 1.6H8.6Q9.5 1.6 9.5 2.5V6.6Q9.5 7.5 8.6 7.5H1.4Q.5 7.5 .5 6.6Z" fill="url(#fg)" stroke="#dcaa5a" stroke-width=".8"/><path d="M1 7.5H9" stroke="#cf943c" stroke-width=".5"/></svg><div class="tt" style="left:27.0px">1390 Sonstige Maßnahmen</div></div>
<div class="tr" style="top:500.7px"><div class="pm plus" style="left:1.5px"></div><svg class="fo" style="left:13.5px" viewBox="0 0 10 8"><path d="M.5 1.8Q.5 .6 1.6 .6H3.6L4.6 1.6H8.6Q9.5 1.6 9.5 2.5V6.6Q9.5 7.5 8.6 7.5H1.4Q.5 7.5 .5 6.6Z" fill="url(#fg)" stroke="#dcaa5a" stroke-width=".8"/><path d="M1 7.5H9" stroke="#cf943c" stroke-width=".5"/></svg><div class="tt" style="left:27.0px">1400 Bauwerk - Technische Anlagen</div></div>
<div class="tr" style="top:511.9px"><div class="pm plus" style="left:1.5px"></div><svg class="fo" style="left:13.5px" viewBox="0 0 10 8"><path d="M.5 1.8Q.5 .6 1.6 .6H3.6L4.6 1.6H8.6Q9.5 1.6 9.5 2.5V6.6Q9.5 7.5 8.6 7.5H1.4Q.5 7.5 .5 6.6Z" fill="url(#fg)" stroke="#dcaa5a" stroke-width=".8"/><path d="M1 7.5H9" stroke="#cf943c" stroke-width=".5"/></svg><div class="tt" style="left:27.0px">1410 Abwasser-, Wasser-, Gasanlagen</div></div>
<div class="tr" style="top:523.1px"><div class="pm plus" style="left:1.5px"></div><svg class="fo" style="left:13.5px" viewBox="0 0 10 8"><path d="M.5 1.8Q.5 .6 1.6 .6H3.6L4.6 1.6H8.6Q9.5 1.6 9.5 2.5V6.6Q9.5 7.5 8.6 7.5H1.4Q.5 7.5 .5 6.6Z" fill="url(#fg)" stroke="#dcaa5a" stroke-width=".8"/><path d="M1 7.5H9" stroke="#cf943c" stroke-width=".5"/></svg><div class="tt" style="left:27.0px">1420 Wärmeversorgungsanlagen</div></div>
<div class="tr" style="top:534.4px"><div class="pm plus" style="left:1.5px"></div><svg class="fo" style="left:13.5px" viewBox="0 0 10 8"><path d="M.5 1.8Q.5 .6 1.6 .6H3.6L4.6 1.6H8.6Q9.5 1.6 9.5 2.5V6.6Q9.5 7.5 8.6 7.5H1.4Q.5 7.5 .5 6.6Z" fill="url(#fg)" stroke="#dcaa5a" stroke-width=".8"/><path d="M1 7.5H9" stroke="#cf943c" stroke-width=".5"/></svg><div class="tt" style="left:27.0px">1430 Lufttechnische Anlagen</div></div>
<div class="tr" style="top:545.6px"><div class="pm plus" style="left:1.5px"></div><svg class="fo" style="left:13.5px" viewBox="0 0 10 8"><path d="M.5 1.8Q.5 .6 1.6 .6H3.6L4.6 1.6H8.6Q9.5 1.6 9.5 2.5V6.6Q9.5 7.5 8.6 7.5H1.4Q.5 7.5 .5 6.6Z" fill="url(#fg)" stroke="#dcaa5a" stroke-width=".8"/><path d="M1 7.5H9" stroke="#cf943c" stroke-width=".5"/></svg><div class="tt" style="left:27.0px">1440 Starkstromanlagen</div></div>
<div class="tr" style="top:556.8px"><div class="pm plus" style="left:1.5px"></div><svg class="fo" style="left:13.5px" viewBox="0 0 10 8"><path d="M.5 1.8Q.5 .6 1.6 .6H3.6L4.6 1.6H8.6Q9.5 1.6 9.5 2.5V6.6Q9.5 7.5 8.6 7.5H1.4Q.5 7.5 .5 6.6Z" fill="url(#fg)" stroke="#dcaa5a" stroke-width=".8"/><path d="M1 7.5H9" stroke="#cf943c" stroke-width=".5"/></svg><div class="tt" style="left:27.0px">1450 Fernmelde- u. informationstechn. Anlagen</div></div>
<div class="tr" style="top:568.0px"><div class="pm plus" style="left:1.5px"></div><svg class="fo" style="left:13.5px" viewBox="0 0 10 8"><path d="M.5 1.8Q.5 .6 1.6 .6H3.6L4.6 1.6H8.6Q9.5 1.6 9.5 2.5V6.6Q9.5 7.5 8.6 7.5H1.4Q.5 7.5 .5 6.6Z" fill="url(#fg)" stroke="#dcaa5a" stroke-width=".8"/><path d="M1 7.5H9" stroke="#cf943c" stroke-width=".5"/></svg><div class="tt" style="left:27.0px">1460 Förderanlagen</div></div>
<div class="tr" style="top:579.2px"><div class="pm plus" style="left:1.5px"></div><svg class="fo" style="left:13.5px" viewBox="0 0 10 8"><path d="M.5 1.8Q.5 .6 1.6 .6H3.6L4.6 1.6H8.6Q9.5 1.6 9.5 2.5V6.6Q9.5 7.5 8.6 7.5H1.4Q.5 7.5 .5 6.6Z" fill="url(#fg)" stroke="#dcaa5a" stroke-width=".8"/><path d="M1 7.5H9" stroke="#cf943c" stroke-width=".5"/></svg><div class="tt" style="left:27.0px">1470 Nutzungsspezifische Anlagen</div></div>
<div class="tr" style="top:590.5px"><div class="pm plus" style="left:1.5px"></div><svg class="fo" style="left:13.5px" viewBox="0 0 10 8"><path d="M.5 1.8Q.5 .6 1.6 .6H3.6L4.6 1.6H8.6Q9.5 1.6 9.5 2.5V6.6Q9.5 7.5 8.6 7.5H1.4Q.5 7.5 .5 6.6Z" fill="url(#fg)" stroke="#dcaa5a" stroke-width=".8"/><path d="M1 7.5H9" stroke="#cf943c" stroke-width=".5"/></svg><div class="tt" style="left:27.0px">1500 Außenanlagen</div></div>
<div class="tr" style="top:601.7px"><div class="pm plus" style="left:1.5px"></div><svg class="fo" style="left:13.5px" viewBox="0 0 10 8"><path d="M.5 1.8Q.5 .6 1.6 .6H3.6L4.6 1.6H8.6Q9.5 1.6 9.5 2.5V6.6Q9.5 7.5 8.6 7.5H1.4Q.5 7.5 .5 6.6Z" fill="url(#fg)" stroke="#dcaa5a" stroke-width=".8"/><path d="M1 7.5H9" stroke="#cf943c" stroke-width=".5"/></svg><div class="tt" style="left:27.0px">1520 Befestigte  Flächen</div></div>
<div id="rsb"><div class="sbup"></div><div class="sbthumb" style="top:11px;height:415px"><div class="grip" style="top:205px"></div></div><div class="sbdn"></div></div>
</div>
<div id="taskbar">
<div style="left:8px;top:1.5px;width:22px;height:12px;border-radius:11px;background:radial-gradient(#e8eef6,#8fa4c0);border:1px solid #dfe6ee"></div>
<div class="tbb" style="left:77px;width:36px"></div>
<div class="tbb" style="left:116px;width:34px"></div>
<div class="tbb" style="left:154px;width:34px"></div>
<div class="tbb" style="left:270px;width:36px;background:linear-gradient(#f2f6fb,#d3deeb)"></div>
<div class="tbb" style="left:347px;width:36px"></div>
<div style="left:58px;top:2px;width:10px;height:5px;background:#e8b93a;border-radius:3px"></div>
<div style="left:91px;top:3px;width:10px;height:4px;background:#4aa3e0;border-radius:3px"></div>
<div style="left:163px;top:2px;width:16px;height:5px;background:#f6e08a;border-radius:1px"></div>
<div style="left:322px;top:3px;width:10px;height:4px;background:#5fb35a;border-radius:1px"></div>
<div style="left:355px;top:2px;width:16px;height:5px;background:#f3e3b0;border-radius:1px"></div>
</div>

</div></div></body></html>
